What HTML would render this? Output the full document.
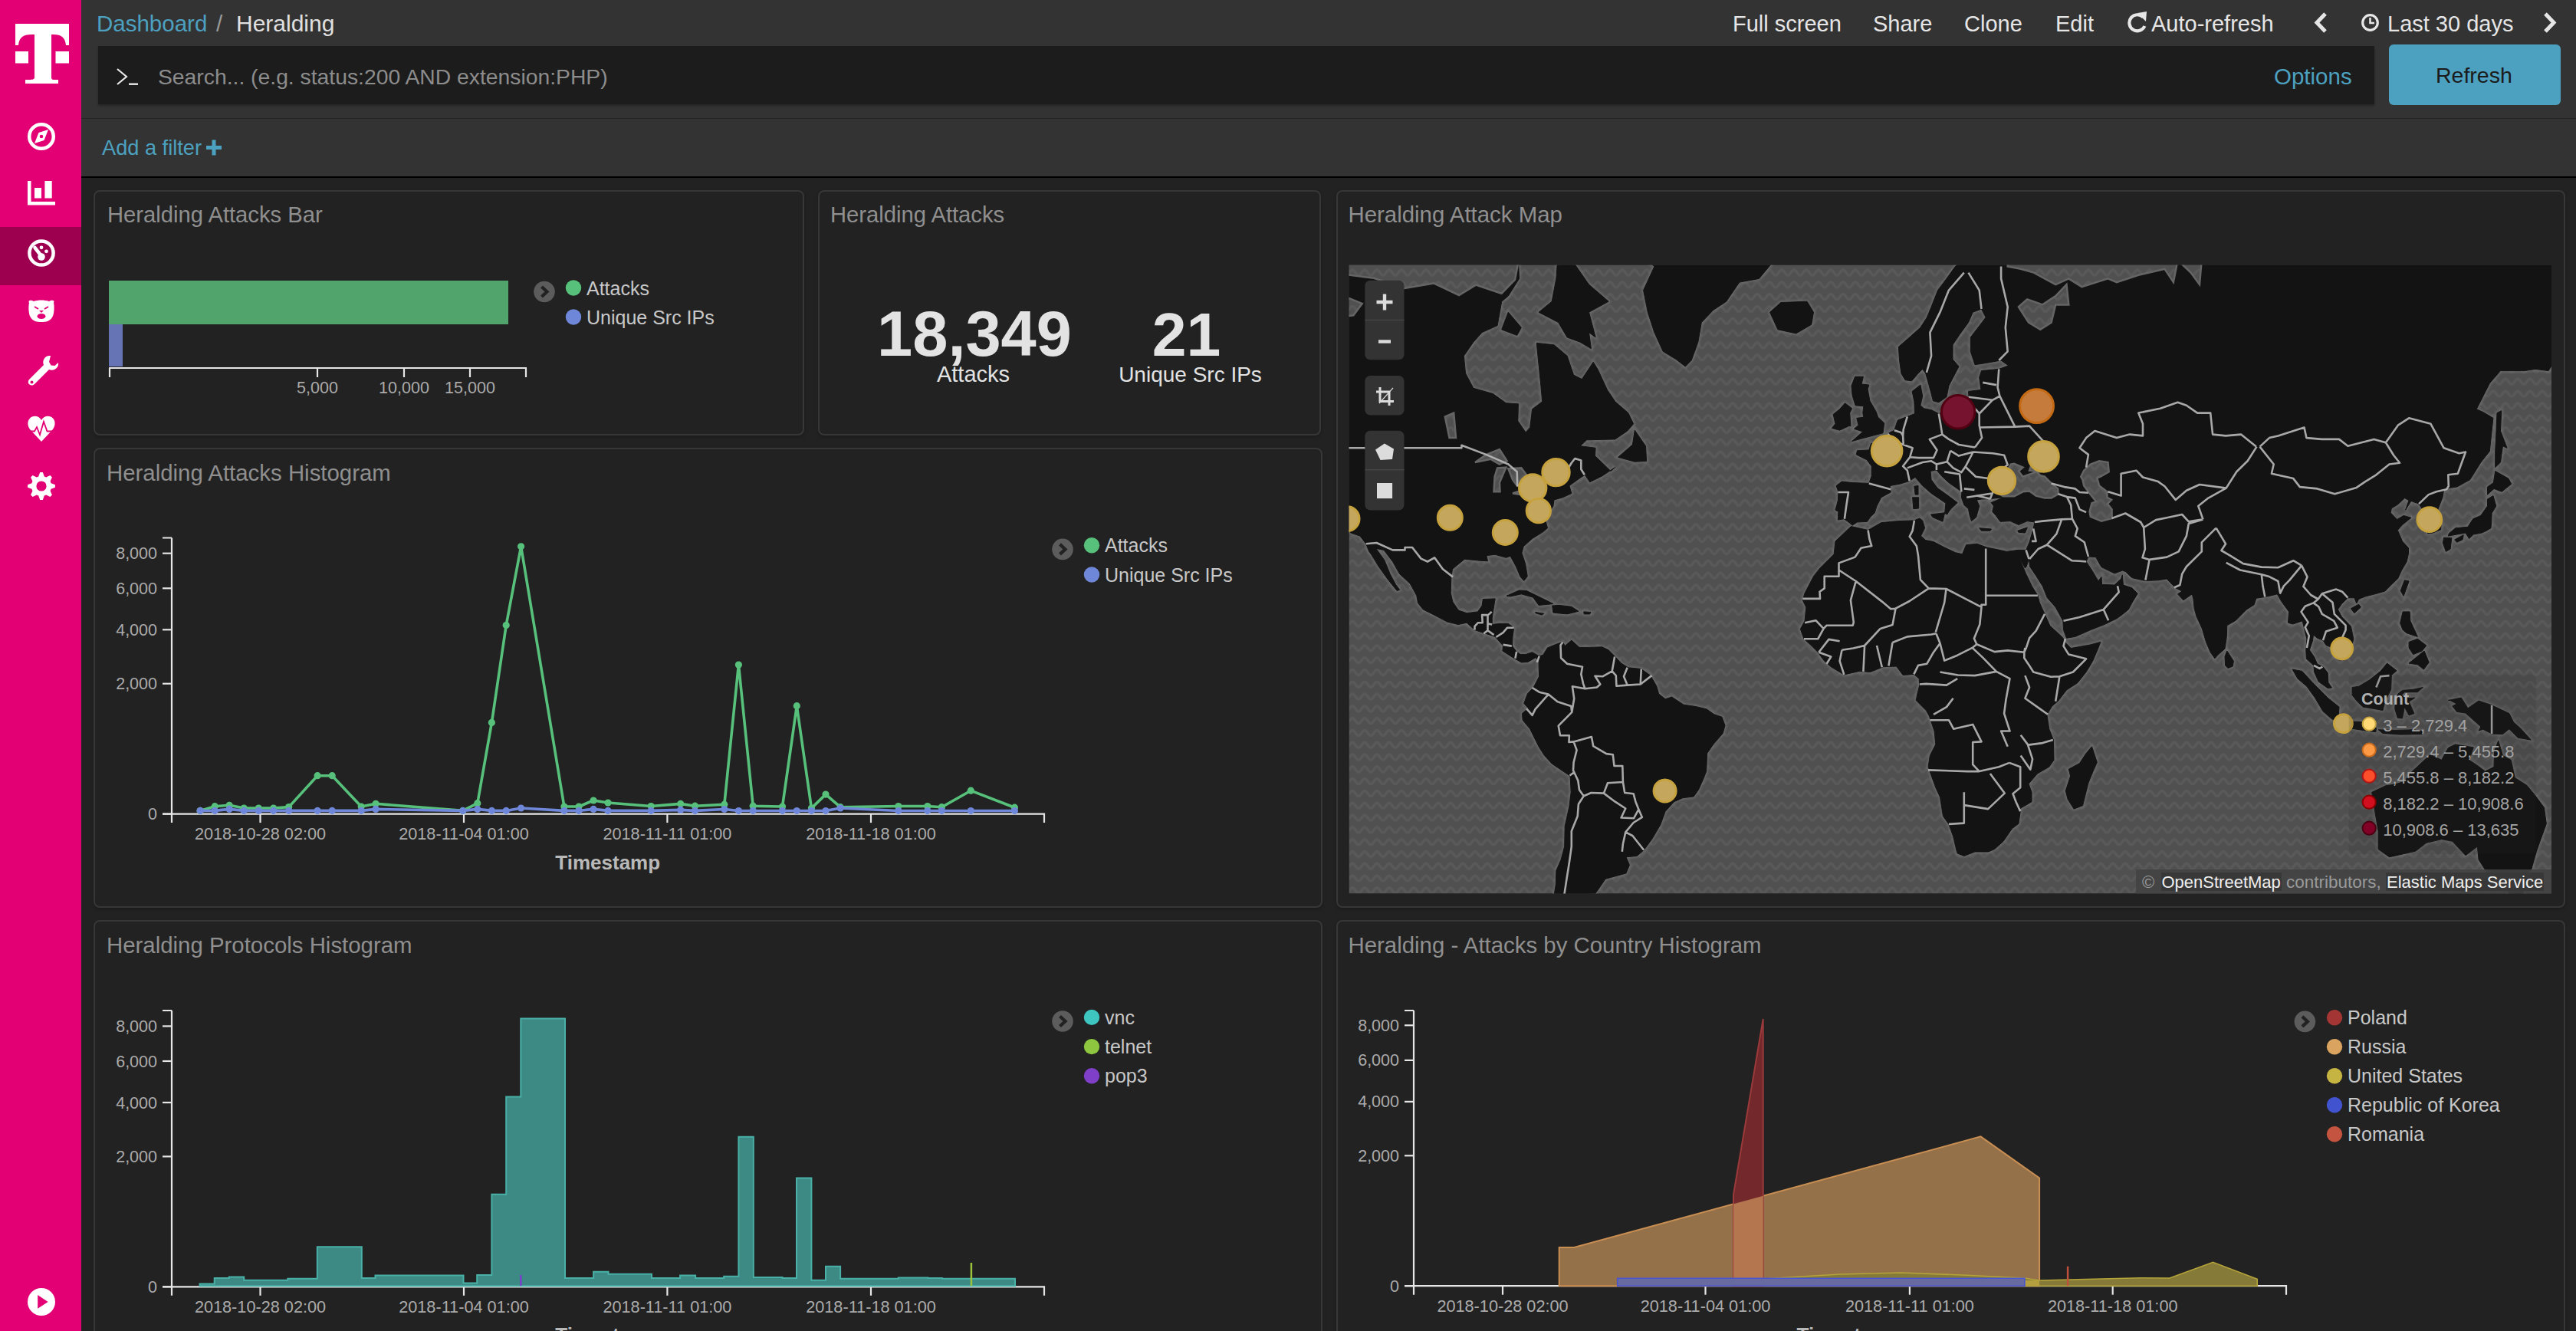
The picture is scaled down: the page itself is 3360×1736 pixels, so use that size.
<!DOCTYPE html>
<html><head><meta charset="utf-8">
<style>
*{box-sizing:border-box;margin:0;padding:0}
html,body{width:3360px;height:1736px;overflow:hidden;background:#222;font-family:"Liberation Sans",sans-serif}
.a{position:absolute;white-space:nowrap;line-height:1}
#side{position:absolute;left:0;top:0;width:106px;height:1736px;background:#e20074}
#act{position:absolute;left:0;top:296px;width:106px;height:76px;background:#9e0050}
#hdr{position:absolute;left:106px;top:0;width:3254px;height:154px;background:#333}
#fbar{position:absolute;left:106px;top:155px;width:3254px;height:75px;background:#333}
#hline{position:absolute;left:106px;top:154px;width:3254px;height:1px;background:#262626}
#bline{position:absolute;left:106px;top:230px;width:3254px;height:2px;background:#000}
#search{position:absolute;left:128px;top:60px;width:2969px;height:76px;background:#1c1c1c;box-shadow:0 2px 3px rgba(0,0,0,.3)}
#refresh{position:absolute;left:3116px;top:58px;width:224px;height:79px;background:#4da1c0;border-radius:6px}
.panel{position:absolute;border:2px solid #373737;border-radius:8px;background:#222;box-shadow:0 2px 4px rgba(0,0,0,.22)}
.hd{color:#e6e6e6;font-size:29px}
svg text{font-family:"Liberation Sans",sans-serif}
</style></head><body>
<div id="side"></div>
<div id="act"></div>
<div id="hdr"></div>
<div id="hline"></div>
<div id="fbar"></div>
<div id="bline"></div>
<div id="search"></div>
<div id="refresh"></div>
<div class="panel" style="left:122px;top:248px;width:927px;height:320px"></div>
<div class="panel" style="left:1067px;top:248px;width:656px;height:320px"></div>
<div class="panel" style="left:1743px;top:248px;width:1603px;height:936px"></div>
<div class="panel" style="left:122px;top:584px;width:1603px;height:600px"></div>
<div class="panel" style="left:122px;top:1200px;width:1603px;height:600px"></div>
<div class="panel" style="left:1743px;top:1200px;width:1603px;height:600px"></div>
<svg style="position:absolute;left:0;top:0" width="3360" height="1736"><defs><clipPath id="mc"><rect x="1759.5" y="345.5" width="1568.5" height="820.0"/></clipPath><pattern id="wave" width="16" height="15.8" patternUnits="userSpaceOnUse"><rect width="16" height="15.8" fill="#505050"/><path d="M-4.0,11.40 L-3.5,11.33 L-3.0,11.14 L-2.5,10.83 L-2.0,10.40 L-1.5,9.89 L-1.0,9.30 L-0.5,8.66 L0.0,8.00 L0.5,7.34 L1.0,6.70 L1.5,6.11 L2.0,5.60 L2.5,5.17 L3.0,4.86 L3.5,4.67 L4.0,4.60 L4.5,4.67 L5.0,4.86 L5.5,5.17 L6.0,5.60 L6.5,6.11 L7.0,6.70 L7.5,7.34 L8.0,8.00 L8.5,8.66 L9.0,9.30 L9.5,9.89 L10.0,10.40 L10.5,10.83 L11.0,11.14 L11.5,11.33 L12.0,11.40 L12.5,11.33 L13.0,11.14 L13.5,10.83 L14.0,10.40 L14.5,9.89 L15.0,9.30 L15.5,8.66 L16.0,8.00 L16.5,7.34 L17.0,6.70 L17.5,6.11 L18.0,5.60 L18.5,5.17 L19.0,4.86 L19.5,4.67 L20.0,4.60" fill="none" stroke="#595959" stroke-width="3.5"/></pattern><filter id="blur1" x="-5%" y="-5%" width="110%" height="110%"><feGaussianBlur stdDeviation="1.6"/></filter></defs><g clip-path="url(#mc)"><rect x="1759.5" y="345.5" width="1568.5" height="820.0" fill="url(#wave)"/><path d="M1651.5,304.4L1651.5,497.8L1708.4,528.8L1725.5,566.6L1739.7,589.5L1742.6,609.6L1742.6,633.5L1740.3,653.4L1748.3,671.0L1754.5,681.0L1761.9,695.0L1773.9,699.1L1781.8,709.3L1785.8,719.4L1789.2,724.0L1798.3,739.0L1809.7,754.9L1822.2,770.5L1825.6,769.3L1820.5,762.4L1813.1,748.6L1805.7,730.5L1794.9,715.4L1805.1,717.4L1816.5,732.5L1825.6,748.6L1839.3,761.2L1847.8,776.7L1849.5,786.4L1856.3,794.9L1870.6,802.1L1887.6,811.0L1901.9,814.5L1913.2,812.2L1923.5,821.6L1936.0,825.7L1950.2,830.4L1960.5,842.0L1959.9,849.0L1972.4,857.0L1984.3,863.9L1992.9,863.4L2003.1,857.6L2007.1,862.2L2007.1,867.9L2007.7,882.2L2000.3,896.5L1992.3,905.0L1987.8,917.5L1993.4,923.8L1985.5,930.6L1986.1,939.2L1995.7,950.7L2007.1,973.8L2014.5,985.4L2024.2,996.0L2041.8,1007.9L2048.1,1012.1L2049.2,1033.3L2046.9,1052.0L2041.2,1077.5L2040.7,1104.1L2036.1,1121.3L2029.9,1135.4L2029.3,1153.7L2027.0,1168.7L2027.0,1200.4L2072.5,1200.4L2078.2,1168.7L2083.9,1161.2L2094.1,1146.3L2120.9,1139.0L2125.4,1128.3L2120.9,1117.8L2135.1,1116.4L2144.2,1108.8L2155.0,1094.0L2165.8,1075.6L2172.1,1058.3L2183.5,1045.7L2194.8,1040.7L2209.1,1038.9L2215.3,1030.3L2222.1,1015.1L2225.6,1006.1L2226.7,982.5L2234.7,970.9L2247.2,956.4L2250.0,946.1L2246.0,935.2L2235.8,931.8L2226.1,924.9L2211.9,921.5L2196.0,919.2L2180.6,909.0L2172.1,911.8L2163.6,905.0L2160.7,894.8L2152.7,881.1L2140.8,872.5L2123.7,870.8L2114.6,865.1L2106.7,856.5L2098.1,847.8L2089.6,843.8L2072.5,844.4L2060.0,844.4L2049.8,835.1L2041.2,842.6L2038.4,837.4L2029.9,840.3L2018.5,844.9L2012.8,854.2L2007.7,855.9L1998.6,850.7L1990.0,853.6L1983.2,853.6L1978.1,850.1L1972.4,842.6L1973.0,830.4L1974.7,818.7L1967.3,813.4L1955.9,813.4L1946.2,814.5L1946.2,806.8L1947.4,797.9L1950.2,780.9L1934.3,781.5L1933.1,790.0L1927.5,797.9L1913.2,799.7L1902.4,796.1L1895.0,785.2L1892.2,773.6L1892.8,753.0L1894.5,742.2L1910.4,729.2L1930.3,731.2L1940.5,731.8L1938.8,724.6L1950.2,723.3L1964.4,727.3L1970.1,725.3L1977.5,739.0L1983.2,752.4L1987.8,757.4L1992.3,751.7L1989.5,735.1L1984.9,721.3L1987.2,712.7L1998.6,702.5L2012.8,693.6L2018.5,688.7L2015.6,678.1L2021.3,667.3L2025.9,660.0L2027.0,651.9L2038.4,648.8L2049.8,643.5L2046.9,633.5L2061.1,623.3L2067.4,619.3L2073.7,628.8L2089.6,620.9L2106.7,609.6L2101.0,614.5L2080.5,594.6L2081.1,584.3L2061.1,581.7L2069.7,573.8L2106.7,572.9L2122.6,562.1L2130.6,552.8L2123.7,538.6L2106.7,523.8L2096.4,508.4L2083.9,481.4L2078.2,472.3L2063.4,494.6L2052.6,489.2L2044.1,464.2L2027.0,449.8L2004.3,447.4L2007.1,475.7L2009.9,503.2L2011.7,523.8L1998.6,533.7L1995.7,557.5L1990.0,563.9L1979.8,549.1L1980.4,526.8L1964.4,525.8L1947.4,513.6L1921.8,506.3L1911.5,486.9L1909.3,464.2L1921.8,446.2L1933.1,433.6L1953.1,424.6L1958.7,393.2L1967.3,386.0L1981.5,363.4L1978.7,304.4ZM2110.6,596.3L2129.4,580.0L2132.3,561.2L2146.5,581.7L2147.6,601.3L2132.3,602.2ZM2075.4,454.7L2061.1,446.2L2044.1,439.9L2032.7,420.6L2007.1,407.2L2024.2,393.2L2029.9,363.4L2031.6,339.3L2032.7,285.4L2052.6,285.4L2053.8,344.3L2072.5,371.1L2098.1,393.2L2072.5,407.2L2081.1,439.9L2072.5,433.6ZM1958.7,429.8L1978.7,437.4L1984.3,427.2L1967.3,407.2ZM2198.3,478.0L2206.2,470.0L2214.8,446.2L2219.3,420.6L2234.7,404.4L2251.7,393.2L2268.8,368.1L2294.4,363.4L2317.2,336.0L2322.8,304.4L2135.1,304.4L2137.9,330.9L2157.9,347.6L2143.6,378.6L2149.3,407.2L2157.9,433.6L2169.2,458.3L2186.3,468.8ZM2318.9,429.8L2308.6,407.2L2322.8,394.6L2357.0,393.2L2365.5,407.2L2362.7,423.3L2342.8,434.9ZM1965.0,777.3L1981.5,769.9L1991.2,770.5L2008.8,779.1L2025.9,787.6L2007.1,789.4L1999.7,779.1L1984.3,774.8L1970.1,777.9ZM2024.7,790.0L2033.8,789.4L2049.8,791.3L2058.9,797.3L2044.1,800.9L2025.9,799.1ZM2002.6,798.5L2013.9,800.3L2011.1,802.1L2003.1,799.7ZM2065.7,797.9L2074.8,798.5L2073.7,800.9L2066.3,800.9ZM2414.4,686.6L2394.0,705.9L2392.2,722.7L2374.0,740.9L2365.5,751.7L2354.1,773.6L2351.3,782.8L2355.8,791.9L2354.1,809.8L2348.4,820.4L2353.0,833.3L2362.7,842.0L2371.2,850.7L2379.7,862.2L2388.3,869.7L2405.3,879.9L2425.2,875.4L2439.5,876.5L2456.5,869.7L2473.6,869.1L2482.1,880.5L2496.4,879.4L2503.2,885.1L2503.8,893.6L2500.9,905.0L2499.2,913.5L2512.3,926.6L2516.3,933.5L2523.1,953.5L2524.8,970.9L2517.4,985.4L2515.1,1000.2L2524.8,1027.2L2530.5,1039.5L2534.5,1064.6L2541.9,1074.9L2547.6,1090.6L2552.1,1109.5L2553.2,1113.0L2561.8,1116.4L2576.0,1110.9L2593.6,1110.9L2601.6,1107.5L2613.0,1097.3L2624.4,1080.8L2632.9,1074.3L2635.2,1058.3L2634.0,1055.1L2650.0,1045.7L2650.0,1033.3L2646.0,1022.4L2657.4,1009.1L2672.7,1000.2L2679.0,991.3L2678.4,965.1L2672.7,950.7L2671.0,939.2L2669.9,931.8L2676.7,920.9L2684.7,914.1L2695.5,899.9L2709.7,890.8L2721.1,876.5L2729.6,862.2L2737.0,844.9L2739.8,837.4L2726.8,840.9L2701.2,845.5L2694.3,838.6L2690.4,831.6L2683.0,824.6L2673.9,816.3L2667.0,800.9L2660.2,785.8L2657.9,776.7L2650.5,764.9L2642.6,748.6L2638.6,739.0L2633.5,726.6L2631.8,717.4L2617.5,719.4L2601.6,716.0L2591.4,714.0L2578.8,709.3L2564.6,710.7L2559.5,722.7L2550.4,720.7L2536.2,714.0L2522.0,706.6L2511.7,704.6L2505.5,699.1L2510.6,688.7L2507.7,678.9L2503.8,676.0L2496.4,678.9L2476.4,679.6L2453.7,681.7L2436.6,691.5ZM2728.5,973.8L2735.3,994.3L2731.3,1003.2L2723.9,1021.2L2716.5,1050.7L2705.1,1055.1L2697.2,1042.6L2694.3,1031.5L2700.6,1012.1L2698.3,1003.2L2712.5,995.5L2721.1,982.5ZM2416.1,685.2L2412.2,681.7L2405.3,676.7L2397.4,678.1L2397.9,667.3L2394.0,665.2L2397.4,652.6L2397.9,641.3L2395.1,633.5L2402.5,628.1L2416.7,629.6L2437.8,630.4L2441.2,620.9L2441.2,608.0L2434.9,599.7L2421.3,592.9L2422.4,587.8L2437.8,586.9L2440.6,578.2L2449.1,580.0L2457.1,573.8L2462.2,565.7L2470.8,561.2L2475.3,548.1L2487.8,543.4L2497.5,539.5L2496.9,523.8L2494.1,510.5L2504.9,502.1L2507.7,516.7L2504.9,528.8L2509.4,532.7L2519.1,534.7L2528.8,539.5L2553.2,531.7L2568.6,526.8L2567.5,510.5L2584.0,508.4L2581.7,492.4L2584.5,483.6L2607.3,481.4L2619.8,476.9L2610.1,470.0L2590.2,473.5L2576.0,475.7L2570.3,458.3L2570.3,439.9L2590.2,414.0L2584.5,403.0L2573.2,407.2L2567.5,420.6L2556.1,436.2L2547.0,449.8L2547.0,468.8L2555.0,478.0L2541.9,503.2L2539.0,517.7L2528.8,524.8L2521.4,522.8L2519.1,513.6L2515.7,501.0L2511.7,486.9L2507.7,481.4L2502.0,486.9L2493.5,496.8L2485.0,495.7L2479.9,486.9L2477.6,470.0L2476.4,452.3L2487.8,442.4L2504.9,427.2L2513.4,414.0L2519.1,400.3L2527.6,378.6L2539.0,363.4L2550.4,347.6L2561.8,336.0L2561.8,221.4L3472.0,221.4L3472.0,427.2L3358.2,452.3L3341.2,454.7L3324.1,483.6L3307.0,481.4L3292.8,483.6L3261.5,483.6L3247.3,500.0L3230.2,533.7L3238.8,537.6L3251.9,545.3L3250.1,562.1L3247.3,588.6L3235.9,603.0L3221.7,625.7L3204.6,635.1L3193.3,636.6L3187.6,638.9L3185.9,648.8L3179.0,666.6L3184.2,681.7L3183.6,690.8L3173.3,695.0L3166.5,695.7L3167.7,688.0L3168.2,674.6L3162.0,672.4L3159.7,664.4L3155.1,657.1L3144.9,653.4L3137.5,665.2L3142.1,652.6L3136.4,649.6L3127.8,657.8L3119.3,663.0L3118.2,668.8L3124.4,675.3L3126.7,677.4L3135.2,672.4L3144.9,675.3L3133.5,684.5L3127.3,691.5L3133.5,705.9L3141.5,714.7L3141.5,722.0L3139.2,732.5L3132.4,744.1L3127.8,754.3L3118.7,763.0L3110.8,771.1L3097.7,774.8L3085.2,777.9L3076.6,781.5L3073.8,787.0L3070.9,779.7L3062.4,779.7L3054.4,787.6L3049.3,794.9L3054.4,804.5L3066.4,816.9L3069.8,833.3L3068.1,840.3L3055.6,846.1L3045.3,855.3L3044.2,845.5L3034.0,841.5L3030.0,835.1L3022.6,832.2L3017.5,828.1L3016.3,836.2L3012.3,847.8L3018.6,857.0L3022.6,866.2L3030.0,869.7L3036.2,877.7L3036.8,890.2L3041.4,897.0L3036.2,897.6L3024.3,889.1L3018.6,876.5L3018.0,867.9L3008.4,859.3L3007.8,847.8L3008.9,833.3L3003.2,809.8L2990.7,814.0L2984.5,812.2L2985.6,797.9L2975.9,784.6L2970.3,774.8L2962.9,776.7L2954.3,778.5L2942.9,780.3L2940.1,788.8L2930.4,794.9L2916.2,809.2L2904.8,815.7L2904.3,830.4L2902.0,846.1L2892.9,854.2L2888.9,858.8L2883.2,850.7L2877.5,837.4L2872.4,819.9L2865.0,803.9L2862.2,793.7L2861.0,781.5L2859.3,774.8L2847.9,782.8L2840.5,774.8L2846.2,771.1L2837.7,766.8L2830.3,759.3L2826.3,754.9L2814.9,756.8L2797.9,757.4L2780.8,753.6L2772.3,745.4L2768.3,744.1L2758.1,747.9L2741.0,739.6L2733.6,726.6L2723.9,726.0L2721.1,732.5L2729.6,745.4L2737.0,758.0L2741.0,752.4L2741.6,762.4L2758.1,763.0L2766.6,754.9L2768.3,749.8L2769.4,763.0L2780.8,766.8L2788.2,774.2L2780.8,786.4L2776.3,794.9L2768.3,801.5L2760.9,806.8L2745.0,814.5L2726.8,821.6L2706.8,830.4L2695.5,832.2L2691.5,821.6L2690.9,809.8L2681.2,791.9L2670.4,779.7L2664.2,764.3L2656.2,751.7L2647.7,739.0L2646.5,729.2L2643.1,739.0L2641.4,740.9L2633.5,726.6L2631.8,717.4L2642.6,717.4L2647.1,707.3L2652.2,689.4L2653.9,681.0L2644.3,679.6L2632.9,684.5L2622.1,679.6L2609.0,680.3L2603.3,672.4L2598.8,667.3L2600.5,660.0L2597.1,655.6L2604.4,652.6L2613.0,648.8L2595.9,650.4L2584.5,651.1L2578.3,651.9L2581.7,660.0L2577.7,674.6L2571.5,679.6L2569.2,672.4L2567.5,663.7L2561.8,658.6L2558.4,648.8L2558.9,641.3L2553.2,637.4L2541.9,629.6L2533.3,621.7L2525.9,612.9L2518.0,614.5L2519.1,625.7L2527.1,636.6L2539.0,645.1L2553.2,655.6L2544.7,663.7L2541.9,667.3L2539.6,671.0L2536.7,669.5L2537.9,656.3L2529.4,650.4L2519.1,643.5L2507.7,633.5L2498.1,622.5L2490.7,627.3L2478.2,631.2L2465.1,633.5L2466.2,642.0L2453.7,648.8L2448.0,660.0L2445.2,668.8L2439.5,674.6L2435.5,680.3L2422.4,681.0ZM2415.6,575.6L2428.1,572.0L2456.0,564.8L2457.7,551.9L2449.7,544.3L2446.9,536.6L2438.9,522.8L2436.1,507.4L2437.8,502.1L2428.1,501.0L2430.4,491.3L2419.6,491.3L2415.0,503.2L2416.1,515.7L2420.1,528.8L2430.9,529.8L2429.8,538.6L2430.9,544.3L2421.8,545.3L2424.1,554.7L2418.4,559.3L2429.8,563.0ZM2413.9,555.6L2412.7,538.6L2415.6,532.7L2406.5,525.8L2399.6,533.7L2391.1,540.5L2394.0,552.8L2389.4,558.4L2399.6,561.2L2411.6,555.6ZM2518.5,671.0L2536.7,668.8L2533.9,680.3L2520.8,674.6ZM2494.6,648.8L2502.6,648.8L2502.6,663.0L2495.8,663.7ZM2496.9,634.3L2502.0,633.5L2502.0,645.1L2498.1,645.1ZM2581.7,688.7L2597.6,690.1L2595.9,692.2L2584.5,692.2ZM2631.8,692.2L2644.3,688.0L2641.4,695.0L2632.9,694.3ZM3244.5,645.1L3253.0,637.4L3263.2,641.3L3275.7,631.2L3271.8,624.1L3254.7,614.5L3252.4,629.6L3244.5,635.1ZM3251.9,646.6L3255.8,660.0L3250.1,669.5L3249.6,681.7L3249.0,688.7L3243.3,692.2L3237.1,695.0L3226.3,697.0L3220.6,702.5L3216.0,695.0L3204.6,697.0L3193.3,699.1L3194.4,695.7L3202.9,688.7L3218.9,687.3L3225.7,676.7L3235.9,672.4L3244.5,660.0L3244.5,651.1ZM3187.6,701.2L3197.8,701.8L3196.1,716.0L3190.4,719.4L3186.4,708.0ZM3201.8,703.9L3213.2,697.7L3212.0,703.9L3204.6,707.3ZM3254.7,609.6L3261.5,603.0L3264.4,581.7L3270.1,584.3L3261.5,562.1L3262.7,535.7L3257.0,538.6L3255.8,566.6L3254.7,588.6ZM3131.2,770.5L3136.4,756.8L3142.1,758.0L3135.2,777.3ZM3066.4,793.7L3076.6,788.2L3079.5,791.9L3070.9,799.7ZM3130.7,812.8L3134.1,797.9L3143.2,797.9L3143.8,809.8L3153.4,830.4L3139.2,825.7L3134.1,821.6ZM3142.1,865.1L3162.0,849.0L3168.2,863.9L3161.4,873.1L3153.4,866.8ZM3142.1,837.4L3153.4,833.3L3164.8,842.0L3159.1,849.0L3147.7,853.6L3142.1,844.9ZM3068.1,896.5L3076.6,895.3L3090.9,886.8L3105.1,875.4L3113.6,865.1L3126.1,874.8L3119.3,880.5L3118.7,899.3L3111.3,913.5L3107.9,926.6L3099.4,924.9L3082.3,922.1L3074.9,915.2L3068.1,906.7ZM2990.2,873.1L3002.7,875.4L3016.9,890.8L3036.8,910.7L3051.0,922.1L3049.9,938.1L3042.5,938.6L3030.0,927.8L3019.2,909.6L3008.9,895.3L2997.0,885.1ZM3046.5,943.8L3053.9,939.2L3064.1,940.9L3079.5,941.5L3089.2,944.3L3099.4,949.5L3098.8,954.7L3082.3,952.4L3062.4,949.5L3048.2,944.9ZM3102.2,951.8L3125.0,952.4L3147.7,951.8L3159.1,953.5L3159.1,957.6L3130.7,958.1L3107.9,956.4ZM3123.9,920.4L3127.8,905.0L3133.5,900.4L3147.7,899.3L3160.3,896.5L3153.4,902.7L3136.4,902.7L3132.4,906.7L3139.2,910.7L3150.0,910.1L3142.1,915.2L3148.9,930.6L3142.1,932.9L3136.4,922.1L3133.5,936.9L3127.3,936.3L3123.9,924.9ZM3193.3,913.5L3210.3,910.1L3218.9,923.8L3233.1,914.1L3250.1,919.8L3272.9,930.6L3278.6,942.1L3287.1,949.5L3301.3,965.1L3284.3,962.2L3272.9,950.7L3264.4,957.6L3250.1,957.0L3238.8,951.2L3233.1,953.0L3235.9,947.8L3216.0,930.1L3204.6,928.3L3198.9,920.9L3204.6,918.1L3195.0,913.0ZM2902.6,867.9L2902.0,856.5L2904.8,849.0L2913.4,862.2L2912.2,869.1L2906.0,871.4ZM3093.7,1033.3L3097.7,1058.3L3102.2,1084.0L3102.2,1107.5L3116.5,1117.8L3150.6,1110.2L3164.8,1099.3L3184.7,1094.6L3198.9,1097.3L3216.0,1115.7L3231.4,1104.1L3233.1,1121.3L3244.5,1139.0L3264.4,1144.8L3280.3,1147.0L3301.3,1135.4L3308.7,1109.5L3321.3,1074.3L3318.4,1053.2L3305.9,1036.4L3295.7,1024.2L3280.3,1014.5L3275.2,991.3L3264.4,985.4L3258.7,966.2L3253.6,979.6L3253.0,1000.2L3241.6,1006.1L3231.4,998.4L3220.6,991.3L3226.3,974.9L3202.4,970.9L3193.3,975.5L3184.7,991.3L3169.9,984.3L3153.4,999.6L3143.2,1009.1L3136.4,1019.3L3123.9,1023.0L3111.9,1024.8L3096.5,1032.1ZM3270.6,1158.9L3291.7,1160.4L3290.0,1178.0L3275.7,1178.8Z" fill="none" stroke="#7a7a7a" stroke-width="5" opacity="0.55" filter="url(#blur1)"/><path d="M1651.5,304.4L1651.5,497.8L1708.4,528.8L1725.5,566.6L1739.7,589.5L1742.6,609.6L1742.6,633.5L1740.3,653.4L1748.3,671.0L1754.5,681.0L1761.9,695.0L1773.9,699.1L1781.8,709.3L1785.8,719.4L1789.2,724.0L1798.3,739.0L1809.7,754.9L1822.2,770.5L1825.6,769.3L1820.5,762.4L1813.1,748.6L1805.7,730.5L1794.9,715.4L1805.1,717.4L1816.5,732.5L1825.6,748.6L1839.3,761.2L1847.8,776.7L1849.5,786.4L1856.3,794.9L1870.6,802.1L1887.6,811.0L1901.9,814.5L1913.2,812.2L1923.5,821.6L1936.0,825.7L1950.2,830.4L1960.5,842.0L1959.9,849.0L1972.4,857.0L1984.3,863.9L1992.9,863.4L2003.1,857.6L2007.1,862.2L2007.1,867.9L2007.7,882.2L2000.3,896.5L1992.3,905.0L1987.8,917.5L1993.4,923.8L1985.5,930.6L1986.1,939.2L1995.7,950.7L2007.1,973.8L2014.5,985.4L2024.2,996.0L2041.8,1007.9L2048.1,1012.1L2049.2,1033.3L2046.9,1052.0L2041.2,1077.5L2040.7,1104.1L2036.1,1121.3L2029.9,1135.4L2029.3,1153.7L2027.0,1168.7L2027.0,1200.4L2072.5,1200.4L2078.2,1168.7L2083.9,1161.2L2094.1,1146.3L2120.9,1139.0L2125.4,1128.3L2120.9,1117.8L2135.1,1116.4L2144.2,1108.8L2155.0,1094.0L2165.8,1075.6L2172.1,1058.3L2183.5,1045.7L2194.8,1040.7L2209.1,1038.9L2215.3,1030.3L2222.1,1015.1L2225.6,1006.1L2226.7,982.5L2234.7,970.9L2247.2,956.4L2250.0,946.1L2246.0,935.2L2235.8,931.8L2226.1,924.9L2211.9,921.5L2196.0,919.2L2180.6,909.0L2172.1,911.8L2163.6,905.0L2160.7,894.8L2152.7,881.1L2140.8,872.5L2123.7,870.8L2114.6,865.1L2106.7,856.5L2098.1,847.8L2089.6,843.8L2072.5,844.4L2060.0,844.4L2049.8,835.1L2041.2,842.6L2038.4,837.4L2029.9,840.3L2018.5,844.9L2012.8,854.2L2007.7,855.9L1998.6,850.7L1990.0,853.6L1983.2,853.6L1978.1,850.1L1972.4,842.6L1973.0,830.4L1974.7,818.7L1967.3,813.4L1955.9,813.4L1946.2,814.5L1946.2,806.8L1947.4,797.9L1950.2,780.9L1934.3,781.5L1933.1,790.0L1927.5,797.9L1913.2,799.7L1902.4,796.1L1895.0,785.2L1892.2,773.6L1892.8,753.0L1894.5,742.2L1910.4,729.2L1930.3,731.2L1940.5,731.8L1938.8,724.6L1950.2,723.3L1964.4,727.3L1970.1,725.3L1977.5,739.0L1983.2,752.4L1987.8,757.4L1992.3,751.7L1989.5,735.1L1984.9,721.3L1987.2,712.7L1998.6,702.5L2012.8,693.6L2018.5,688.7L2015.6,678.1L2021.3,667.3L2025.9,660.0L2027.0,651.9L2038.4,648.8L2049.8,643.5L2046.9,633.5L2061.1,623.3L2067.4,619.3L2073.7,628.8L2089.6,620.9L2106.7,609.6L2101.0,614.5L2080.5,594.6L2081.1,584.3L2061.1,581.7L2069.7,573.8L2106.7,572.9L2122.6,562.1L2130.6,552.8L2123.7,538.6L2106.7,523.8L2096.4,508.4L2083.9,481.4L2078.2,472.3L2063.4,494.6L2052.6,489.2L2044.1,464.2L2027.0,449.8L2004.3,447.4L2007.1,475.7L2009.9,503.2L2011.7,523.8L1998.6,533.7L1995.7,557.5L1990.0,563.9L1979.8,549.1L1980.4,526.8L1964.4,525.8L1947.4,513.6L1921.8,506.3L1911.5,486.9L1909.3,464.2L1921.8,446.2L1933.1,433.6L1953.1,424.6L1958.7,393.2L1967.3,386.0L1981.5,363.4L1978.7,304.4ZM2110.6,596.3L2129.4,580.0L2132.3,561.2L2146.5,581.7L2147.6,601.3L2132.3,602.2ZM2075.4,454.7L2061.1,446.2L2044.1,439.9L2032.7,420.6L2007.1,407.2L2024.2,393.2L2029.9,363.4L2031.6,339.3L2032.7,285.4L2052.6,285.4L2053.8,344.3L2072.5,371.1L2098.1,393.2L2072.5,407.2L2081.1,439.9L2072.5,433.6ZM1958.7,429.8L1978.7,437.4L1984.3,427.2L1967.3,407.2ZM2198.3,478.0L2206.2,470.0L2214.8,446.2L2219.3,420.6L2234.7,404.4L2251.7,393.2L2268.8,368.1L2294.4,363.4L2317.2,336.0L2322.8,304.4L2135.1,304.4L2137.9,330.9L2157.9,347.6L2143.6,378.6L2149.3,407.2L2157.9,433.6L2169.2,458.3L2186.3,468.8ZM2318.9,429.8L2308.6,407.2L2322.8,394.6L2357.0,393.2L2365.5,407.2L2362.7,423.3L2342.8,434.9ZM1965.0,777.3L1981.5,769.9L1991.2,770.5L2008.8,779.1L2025.9,787.6L2007.1,789.4L1999.7,779.1L1984.3,774.8L1970.1,777.9ZM2024.7,790.0L2033.8,789.4L2049.8,791.3L2058.9,797.3L2044.1,800.9L2025.9,799.1ZM2002.6,798.5L2013.9,800.3L2011.1,802.1L2003.1,799.7ZM2065.7,797.9L2074.8,798.5L2073.7,800.9L2066.3,800.9ZM2414.4,686.6L2394.0,705.9L2392.2,722.7L2374.0,740.9L2365.5,751.7L2354.1,773.6L2351.3,782.8L2355.8,791.9L2354.1,809.8L2348.4,820.4L2353.0,833.3L2362.7,842.0L2371.2,850.7L2379.7,862.2L2388.3,869.7L2405.3,879.9L2425.2,875.4L2439.5,876.5L2456.5,869.7L2473.6,869.1L2482.1,880.5L2496.4,879.4L2503.2,885.1L2503.8,893.6L2500.9,905.0L2499.2,913.5L2512.3,926.6L2516.3,933.5L2523.1,953.5L2524.8,970.9L2517.4,985.4L2515.1,1000.2L2524.8,1027.2L2530.5,1039.5L2534.5,1064.6L2541.9,1074.9L2547.6,1090.6L2552.1,1109.5L2553.2,1113.0L2561.8,1116.4L2576.0,1110.9L2593.6,1110.9L2601.6,1107.5L2613.0,1097.3L2624.4,1080.8L2632.9,1074.3L2635.2,1058.3L2634.0,1055.1L2650.0,1045.7L2650.0,1033.3L2646.0,1022.4L2657.4,1009.1L2672.7,1000.2L2679.0,991.3L2678.4,965.1L2672.7,950.7L2671.0,939.2L2669.9,931.8L2676.7,920.9L2684.7,914.1L2695.5,899.9L2709.7,890.8L2721.1,876.5L2729.6,862.2L2737.0,844.9L2739.8,837.4L2726.8,840.9L2701.2,845.5L2694.3,838.6L2690.4,831.6L2683.0,824.6L2673.9,816.3L2667.0,800.9L2660.2,785.8L2657.9,776.7L2650.5,764.9L2642.6,748.6L2638.6,739.0L2633.5,726.6L2631.8,717.4L2617.5,719.4L2601.6,716.0L2591.4,714.0L2578.8,709.3L2564.6,710.7L2559.5,722.7L2550.4,720.7L2536.2,714.0L2522.0,706.6L2511.7,704.6L2505.5,699.1L2510.6,688.7L2507.7,678.9L2503.8,676.0L2496.4,678.9L2476.4,679.6L2453.7,681.7L2436.6,691.5ZM2728.5,973.8L2735.3,994.3L2731.3,1003.2L2723.9,1021.2L2716.5,1050.7L2705.1,1055.1L2697.2,1042.6L2694.3,1031.5L2700.6,1012.1L2698.3,1003.2L2712.5,995.5L2721.1,982.5ZM2416.1,685.2L2412.2,681.7L2405.3,676.7L2397.4,678.1L2397.9,667.3L2394.0,665.2L2397.4,652.6L2397.9,641.3L2395.1,633.5L2402.5,628.1L2416.7,629.6L2437.8,630.4L2441.2,620.9L2441.2,608.0L2434.9,599.7L2421.3,592.9L2422.4,587.8L2437.8,586.9L2440.6,578.2L2449.1,580.0L2457.1,573.8L2462.2,565.7L2470.8,561.2L2475.3,548.1L2487.8,543.4L2497.5,539.5L2496.9,523.8L2494.1,510.5L2504.9,502.1L2507.7,516.7L2504.9,528.8L2509.4,532.7L2519.1,534.7L2528.8,539.5L2553.2,531.7L2568.6,526.8L2567.5,510.5L2584.0,508.4L2581.7,492.4L2584.5,483.6L2607.3,481.4L2619.8,476.9L2610.1,470.0L2590.2,473.5L2576.0,475.7L2570.3,458.3L2570.3,439.9L2590.2,414.0L2584.5,403.0L2573.2,407.2L2567.5,420.6L2556.1,436.2L2547.0,449.8L2547.0,468.8L2555.0,478.0L2541.9,503.2L2539.0,517.7L2528.8,524.8L2521.4,522.8L2519.1,513.6L2515.7,501.0L2511.7,486.9L2507.7,481.4L2502.0,486.9L2493.5,496.8L2485.0,495.7L2479.9,486.9L2477.6,470.0L2476.4,452.3L2487.8,442.4L2504.9,427.2L2513.4,414.0L2519.1,400.3L2527.6,378.6L2539.0,363.4L2550.4,347.6L2561.8,336.0L2561.8,221.4L3472.0,221.4L3472.0,427.2L3358.2,452.3L3341.2,454.7L3324.1,483.6L3307.0,481.4L3292.8,483.6L3261.5,483.6L3247.3,500.0L3230.2,533.7L3238.8,537.6L3251.9,545.3L3250.1,562.1L3247.3,588.6L3235.9,603.0L3221.7,625.7L3204.6,635.1L3193.3,636.6L3187.6,638.9L3185.9,648.8L3179.0,666.6L3184.2,681.7L3183.6,690.8L3173.3,695.0L3166.5,695.7L3167.7,688.0L3168.2,674.6L3162.0,672.4L3159.7,664.4L3155.1,657.1L3144.9,653.4L3137.5,665.2L3142.1,652.6L3136.4,649.6L3127.8,657.8L3119.3,663.0L3118.2,668.8L3124.4,675.3L3126.7,677.4L3135.2,672.4L3144.9,675.3L3133.5,684.5L3127.3,691.5L3133.5,705.9L3141.5,714.7L3141.5,722.0L3139.2,732.5L3132.4,744.1L3127.8,754.3L3118.7,763.0L3110.8,771.1L3097.7,774.8L3085.2,777.9L3076.6,781.5L3073.8,787.0L3070.9,779.7L3062.4,779.7L3054.4,787.6L3049.3,794.9L3054.4,804.5L3066.4,816.9L3069.8,833.3L3068.1,840.3L3055.6,846.1L3045.3,855.3L3044.2,845.5L3034.0,841.5L3030.0,835.1L3022.6,832.2L3017.5,828.1L3016.3,836.2L3012.3,847.8L3018.6,857.0L3022.6,866.2L3030.0,869.7L3036.2,877.7L3036.8,890.2L3041.4,897.0L3036.2,897.6L3024.3,889.1L3018.6,876.5L3018.0,867.9L3008.4,859.3L3007.8,847.8L3008.9,833.3L3003.2,809.8L2990.7,814.0L2984.5,812.2L2985.6,797.9L2975.9,784.6L2970.3,774.8L2962.9,776.7L2954.3,778.5L2942.9,780.3L2940.1,788.8L2930.4,794.9L2916.2,809.2L2904.8,815.7L2904.3,830.4L2902.0,846.1L2892.9,854.2L2888.9,858.8L2883.2,850.7L2877.5,837.4L2872.4,819.9L2865.0,803.9L2862.2,793.7L2861.0,781.5L2859.3,774.8L2847.9,782.8L2840.5,774.8L2846.2,771.1L2837.7,766.8L2830.3,759.3L2826.3,754.9L2814.9,756.8L2797.9,757.4L2780.8,753.6L2772.3,745.4L2768.3,744.1L2758.1,747.9L2741.0,739.6L2733.6,726.6L2723.9,726.0L2721.1,732.5L2729.6,745.4L2737.0,758.0L2741.0,752.4L2741.6,762.4L2758.1,763.0L2766.6,754.9L2768.3,749.8L2769.4,763.0L2780.8,766.8L2788.2,774.2L2780.8,786.4L2776.3,794.9L2768.3,801.5L2760.9,806.8L2745.0,814.5L2726.8,821.6L2706.8,830.4L2695.5,832.2L2691.5,821.6L2690.9,809.8L2681.2,791.9L2670.4,779.7L2664.2,764.3L2656.2,751.7L2647.7,739.0L2646.5,729.2L2643.1,739.0L2641.4,740.9L2633.5,726.6L2631.8,717.4L2642.6,717.4L2647.1,707.3L2652.2,689.4L2653.9,681.0L2644.3,679.6L2632.9,684.5L2622.1,679.6L2609.0,680.3L2603.3,672.4L2598.8,667.3L2600.5,660.0L2597.1,655.6L2604.4,652.6L2613.0,648.8L2595.9,650.4L2584.5,651.1L2578.3,651.9L2581.7,660.0L2577.7,674.6L2571.5,679.6L2569.2,672.4L2567.5,663.7L2561.8,658.6L2558.4,648.8L2558.9,641.3L2553.2,637.4L2541.9,629.6L2533.3,621.7L2525.9,612.9L2518.0,614.5L2519.1,625.7L2527.1,636.6L2539.0,645.1L2553.2,655.6L2544.7,663.7L2541.9,667.3L2539.6,671.0L2536.7,669.5L2537.9,656.3L2529.4,650.4L2519.1,643.5L2507.7,633.5L2498.1,622.5L2490.7,627.3L2478.2,631.2L2465.1,633.5L2466.2,642.0L2453.7,648.8L2448.0,660.0L2445.2,668.8L2439.5,674.6L2435.5,680.3L2422.4,681.0ZM2415.6,575.6L2428.1,572.0L2456.0,564.8L2457.7,551.9L2449.7,544.3L2446.9,536.6L2438.9,522.8L2436.1,507.4L2437.8,502.1L2428.1,501.0L2430.4,491.3L2419.6,491.3L2415.0,503.2L2416.1,515.7L2420.1,528.8L2430.9,529.8L2429.8,538.6L2430.9,544.3L2421.8,545.3L2424.1,554.7L2418.4,559.3L2429.8,563.0ZM2413.9,555.6L2412.7,538.6L2415.6,532.7L2406.5,525.8L2399.6,533.7L2391.1,540.5L2394.0,552.8L2389.4,558.4L2399.6,561.2L2411.6,555.6ZM2518.5,671.0L2536.7,668.8L2533.9,680.3L2520.8,674.6ZM2494.6,648.8L2502.6,648.8L2502.6,663.0L2495.8,663.7ZM2496.9,634.3L2502.0,633.5L2502.0,645.1L2498.1,645.1ZM2581.7,688.7L2597.6,690.1L2595.9,692.2L2584.5,692.2ZM2631.8,692.2L2644.3,688.0L2641.4,695.0L2632.9,694.3ZM3244.5,645.1L3253.0,637.4L3263.2,641.3L3275.7,631.2L3271.8,624.1L3254.7,614.5L3252.4,629.6L3244.5,635.1ZM3251.9,646.6L3255.8,660.0L3250.1,669.5L3249.6,681.7L3249.0,688.7L3243.3,692.2L3237.1,695.0L3226.3,697.0L3220.6,702.5L3216.0,695.0L3204.6,697.0L3193.3,699.1L3194.4,695.7L3202.9,688.7L3218.9,687.3L3225.7,676.7L3235.9,672.4L3244.5,660.0L3244.5,651.1ZM3187.6,701.2L3197.8,701.8L3196.1,716.0L3190.4,719.4L3186.4,708.0ZM3201.8,703.9L3213.2,697.7L3212.0,703.9L3204.6,707.3ZM3254.7,609.6L3261.5,603.0L3264.4,581.7L3270.1,584.3L3261.5,562.1L3262.7,535.7L3257.0,538.6L3255.8,566.6L3254.7,588.6ZM3131.2,770.5L3136.4,756.8L3142.1,758.0L3135.2,777.3ZM3066.4,793.7L3076.6,788.2L3079.5,791.9L3070.9,799.7ZM3130.7,812.8L3134.1,797.9L3143.2,797.9L3143.8,809.8L3153.4,830.4L3139.2,825.7L3134.1,821.6ZM3142.1,865.1L3162.0,849.0L3168.2,863.9L3161.4,873.1L3153.4,866.8ZM3142.1,837.4L3153.4,833.3L3164.8,842.0L3159.1,849.0L3147.7,853.6L3142.1,844.9ZM3068.1,896.5L3076.6,895.3L3090.9,886.8L3105.1,875.4L3113.6,865.1L3126.1,874.8L3119.3,880.5L3118.7,899.3L3111.3,913.5L3107.9,926.6L3099.4,924.9L3082.3,922.1L3074.9,915.2L3068.1,906.7ZM2990.2,873.1L3002.7,875.4L3016.9,890.8L3036.8,910.7L3051.0,922.1L3049.9,938.1L3042.5,938.6L3030.0,927.8L3019.2,909.6L3008.9,895.3L2997.0,885.1ZM3046.5,943.8L3053.9,939.2L3064.1,940.9L3079.5,941.5L3089.2,944.3L3099.4,949.5L3098.8,954.7L3082.3,952.4L3062.4,949.5L3048.2,944.9ZM3102.2,951.8L3125.0,952.4L3147.7,951.8L3159.1,953.5L3159.1,957.6L3130.7,958.1L3107.9,956.4ZM3123.9,920.4L3127.8,905.0L3133.5,900.4L3147.7,899.3L3160.3,896.5L3153.4,902.7L3136.4,902.7L3132.4,906.7L3139.2,910.7L3150.0,910.1L3142.1,915.2L3148.9,930.6L3142.1,932.9L3136.4,922.1L3133.5,936.9L3127.3,936.3L3123.9,924.9ZM3193.3,913.5L3210.3,910.1L3218.9,923.8L3233.1,914.1L3250.1,919.8L3272.9,930.6L3278.6,942.1L3287.1,949.5L3301.3,965.1L3284.3,962.2L3272.9,950.7L3264.4,957.6L3250.1,957.0L3238.8,951.2L3233.1,953.0L3235.9,947.8L3216.0,930.1L3204.6,928.3L3198.9,920.9L3204.6,918.1L3195.0,913.0ZM2902.6,867.9L2902.0,856.5L2904.8,849.0L2913.4,862.2L2912.2,869.1L2906.0,871.4ZM3093.7,1033.3L3097.7,1058.3L3102.2,1084.0L3102.2,1107.5L3116.5,1117.8L3150.6,1110.2L3164.8,1099.3L3184.7,1094.6L3198.9,1097.3L3216.0,1115.7L3231.4,1104.1L3233.1,1121.3L3244.5,1139.0L3264.4,1144.8L3280.3,1147.0L3301.3,1135.4L3308.7,1109.5L3321.3,1074.3L3318.4,1053.2L3305.9,1036.4L3295.7,1024.2L3280.3,1014.5L3275.2,991.3L3264.4,985.4L3258.7,966.2L3253.6,979.6L3253.0,1000.2L3241.6,1006.1L3231.4,998.4L3220.6,991.3L3226.3,974.9L3202.4,970.9L3193.3,975.5L3184.7,991.3L3169.9,984.3L3153.4,999.6L3143.2,1009.1L3136.4,1019.3L3123.9,1023.0L3111.9,1024.8L3096.5,1032.1ZM3270.6,1158.9L3291.7,1160.4L3290.0,1178.0L3275.7,1178.8Z" fill="#131313" stroke="#131313" stroke-width="1"/><path d="M2714.2,621.7L2718.2,613.7L2726.8,605.5L2738.1,601.3L2749.5,603.0L2750.7,615.3L2739.8,621.7L2735.3,623.3L2738.1,633.5L2748.4,641.3L2748.4,648.8L2754.1,651.9L2748.9,657.1L2754.6,664.4L2754.6,676.0L2741.0,679.6L2726.8,673.9L2725.6,667.3L2728.5,656.3L2734.2,654.1L2726.8,645.1L2721.1,637.4L2718.2,633.5L2716.5,625.7ZM2613.0,647.3L2627.2,647.3L2638.6,641.3L2647.1,640.5L2655.6,646.6L2667.0,649.6L2675.6,649.6L2684.7,644.3L2684.1,637.4L2675.6,630.4L2667.0,621.7L2661.3,620.1L2656.2,615.3L2650.0,617.7L2638.6,621.7L2632.9,614.5L2638.6,609.6L2627.2,604.7L2622.7,605.5L2617.0,616.1L2610.7,624.1L2606.7,635.1L2607.3,644.3ZM2647.1,613.7L2650.0,605.5L2660.2,600.5L2671.6,599.7L2665.3,607.1L2661.3,615.3L2656.2,614.5ZM2644.3,390.3L2632.9,400.3L2646.0,420.6L2661.3,429.8L2675.6,420.6L2681.2,397.4L2698.3,397.4L2695.5,371.1L2681.2,386.0L2664.2,397.4ZM2618.7,347.6L2635.7,350.8L2652.8,355.6L2681.2,371.1L2698.3,363.4L2715.4,374.1L2749.5,363.4L2760.9,368.1L2789.3,358.7L2823.5,350.8L2834.9,368.1L2840.5,339.3L2857.6,355.6L2869.0,371.1L2874.7,304.4L2618.7,304.4ZM1924.0,603.0L1938.8,592.9L1955.9,586.1L1965.6,601.3L1955.9,605.5L1944.5,598.8ZM1948.5,641.3L1949.6,621.7L1953.1,610.4L1964.4,609.6L1955.9,629.6L1956.5,641.3ZM1967.3,611.2L1984.3,610.4L1992.9,621.7L1978.7,633.5L1973.0,625.7ZM1973.0,643.5L1998.6,635.1L1999.1,637.4L1984.3,645.1ZM1994.0,631.2L2014.5,624.1L2012.8,631.2ZM1782.4,464.2L1805.1,452.3L1819.4,442.4L1799.5,460.6ZM1736.9,414.0L1759.6,388.9L1776.7,396.0L1765.3,411.3ZM1890.5,571.1L1899.0,571.1L1896.2,538.6L1884.8,543.4ZM1755,340 L1755,358 L1792,362.7 L1832,376 L1870,369.4 L1903,385 L1925,371.6 L1958.5,382.7 L1976,365 L1980.7,340Z" fill="url(#wave)" stroke="#656565" stroke-width="2.5"/><path d="M1746.5,584.3L1906.4,584.3L1906.4,580.8L1938.3,592.9L1967.3,605.5L1978.7,615.3L1979.2,633.5L1998.6,632.0L2011.1,628.8L2023.0,617.7L2041.2,617.7L2049.8,603.8L2054.3,598.0L2062.3,600.5L2062.3,612.0L2066.8,619.3M1781.8,709.3L1795.5,708.0L1816.5,717.4L1832.5,717.4L1832.5,714.0L1842.1,714.0L1853.5,728.6L1862.0,732.5L1871.1,727.3L1881.9,742.2L1895.0,752.4M1923.5,821.6L1923.5,816.9L1928.0,812.2L1933.7,812.2L1933.1,802.1L1941.1,802.1L1945.7,797.9M1940.5,802.1L1940.5,813.4L1946.2,814.5M1940.5,813.4L1940.5,822.2L1935.4,826.3M1940.5,822.2L1948.5,828.1M1951.4,831.0L1960.5,825.1L1966.1,818.7L1974.7,818.7M1960.5,840.9L1971.8,842.6M1976.4,858.8L1978.1,850.1M2007.7,855.9L2004.8,863.9M2038.4,837.4L2035.5,841.5L2036.1,858.2L2044.1,865.7L2064.0,869.7L2062.3,879.4L2065.1,891.9L2067.4,898.2M1998.6,897.0L2007.7,902.7L2019.6,905.6L2031.6,915.2L2049.2,920.9L2050.3,928.9L2053.2,911.3L2050.9,895.3L2067.4,898.2L2082.8,896.5L2087.3,892.5L2080.5,881.7L2090.7,882.2L2102.7,875.4L2106.1,856.5M2122.6,870.8L2118.0,882.2L2122.6,893.6M2102.7,875.4L2107.8,881.1L2108.4,894.8L2122.6,893.6L2139.7,892.5L2154.4,881.1M2140.8,872.5L2139.7,892.5M1991.2,924.4L1998.6,932.9L2002.6,924.9L2019.6,905.6M2050.3,928.9L2032.7,946.6L2035.0,959.3L2046.9,959.3L2046.4,968.0L2052.6,967.4L2056.6,978.4L2052.6,994.3L2052.0,1004.9L2053.2,1007.3L2047.5,1011.5M2052.6,967.4L2075.9,961.0L2078.2,973.2L2095.3,983.1L2103.8,984.3L2105.5,999.0L2116.3,999.0L2116.9,1020.0M2053.2,1007.3L2058.3,1018.1L2060.0,1030.3L2065.7,1038.3L2075.4,1034.0L2091.9,1034.6L2097.0,1021.2L2116.9,1020.0M2065.7,1038.3L2058.9,1048.8L2057.7,1064.6L2049.8,1084.0L2049.8,1104.1L2046.9,1124.8L2043.5,1146.3L2040.1,1168.7L2041.2,1192.3M2091.9,1034.6L2106.7,1045.7L2120.3,1054.5L2114.6,1066.5L2131.1,1067.2L2137.4,1055.7L2133.4,1045.7L2130.6,1035.2L2119.2,1034.0L2116.9,1020.0M2137.4,1055.7L2141.9,1065.9L2130.6,1073.0L2120.3,1085.4L2129.4,1090.0L2144.2,1108.8M2120.3,1085.4L2116.9,1100.7L2115.8,1110.9M2436.6,691.5L2438.3,702.5L2441.2,712.0L2427.5,714.7L2419.6,726.6L2398.5,734.4L2398.5,743.5L2398.5,751.7L2379.7,751.7L2379.7,767.4L2373.5,771.7L2374.0,780.9L2351.3,780.9M2398.5,743.5L2420.7,758.0L2454.8,784.6L2466.2,794.3L2472.5,793.7M2354.1,812.2L2368.4,809.2L2378.6,819.9L2382.6,815.7L2416.7,815.7L2417.8,811.6L2413.9,782.8L2420.7,758.0M2496.9,678.9L2494.6,692.2L2490.7,699.8L2499.8,712.0L2502.0,724.6L2504.9,756.2L2515.7,767.4L2490.7,784.0L2472.5,793.7L2468.5,815.1L2452.6,819.9M2590.2,715.4L2590.2,776.7L2657.9,776.7M2590.2,776.7L2590.2,788.8L2584.5,788.8L2584.5,791.9L2538.5,768.0L2515.7,767.4M2584.5,791.9L2582.3,814.5L2574.9,832.7L2578.3,840.3L2572.6,844.9M2538.5,768.0L2536.2,785.8L2524.8,824.6M2468.5,838.0L2487.8,830.4L2519.1,827.5L2525.4,826.3M2417.3,845.5L2432.1,842.0L2452.6,819.9M2496.4,879.4L2502.0,867.9L2513.4,865.7L2522.0,850.7L2530.5,839.1L2525.4,826.3M2530.5,839.1L2536.2,861.6L2553.2,854.7L2572.6,844.9L2586.2,857.6L2603.9,875.9M2530.5,876.5L2553.8,880.5L2576.0,881.1L2603.9,875.9M2578.3,840.3L2601.6,850.1L2618.7,848.4L2640.3,850.7L2641.4,844.9M2667.0,800.9L2655.6,822.8L2647.1,832.2L2643.1,844.4L2640.3,850.7L2640.3,858.2L2646.5,867.4L2652.2,876.5L2675.0,882.8L2686.4,882.2L2704.0,876.5L2721.1,859.3L2698.3,853.6L2691.5,842.6L2693.8,833.3M2686.4,882.2L2681.2,914.7M2641.4,881.1L2647.1,896.5L2641.4,910.7L2661.3,924.9L2671.0,931.8M2677.8,965.1L2664.2,969.1L2647.1,971.4L2644.8,970.9M2603.9,875.9L2621.5,885.1L2616.4,913.0L2614.1,930.6L2621.5,953.5L2610.1,953.5L2618.7,973.8M2503.8,892.5L2512.3,891.9L2539.0,893.6L2553.2,885.1M2547.6,910.7L2539.0,922.1L2522.0,931.8M2517.4,939.2L2541.9,939.2L2548.1,950.7L2573.2,944.9L2584.5,967.4L2573.2,968.0L2573.2,979.6L2573.2,997.2L2581.7,1006.1M2515.1,1004.4L2566.3,1006.1L2581.7,1006.1L2607.3,1000.2L2620.9,994.9M2561.8,1033.3L2561.8,1050.1L2561.8,1073.6L2541.9,1074.9M2561.8,1050.1L2593.1,1055.1L2614.7,1034.6L2595.9,1009.1M2635.2,1058.3L2629.5,1045.7L2625.5,1035.2L2635.2,1027.2L2635.2,1000.2L2620.9,994.9M2635.7,958.7L2644.8,970.9L2651.1,990.1L2648.3,1003.8L2635.7,985.4M2430.4,875.9L2432.1,842.0M2454.8,870.2L2448.0,842.0M2463.4,868.5L2468.5,838.0M2405.3,879.9L2399.6,862.2L2402.5,847.8M2382.6,865.7L2388.3,856.5L2372.3,850.7M2353.0,833.3L2371.2,833.3L2378.6,819.9M2402.5,847.8L2417.3,845.5M2372.3,850.7L2385.4,833.9L2399.6,836.2M2437.8,630.4L2466.2,638.2M2397.4,642.0L2411.0,642.0L2408.2,660.0L2405.9,676.7M2462.2,565.7L2471.9,575.6L2482.7,580.0L2494.6,584.3L2491.2,596.3L2482.1,608.0L2487.8,613.7L2490.7,627.3M2487.8,543.4L2482.7,560.2L2482.1,568.4L2482.7,580.0M2470.8,561.2L2479.3,563.9L2482.1,568.4M2528.8,539.5L2531.1,552.8L2533.3,566.6L2516.8,572.9L2526.5,586.9L2522.0,597.1L2502.6,597.1L2491.2,596.3M2487.8,610.4L2507.7,603.0L2519.1,601.3L2525.9,605.5L2525.9,612.9M2533.3,566.6L2541.9,572.9L2555.0,580.0L2576.0,583.5M2576.0,583.5L2585.1,571.1L2581.7,554.7L2581.7,539.5L2577.7,534.7L2559.5,534.7M2577.7,534.7L2568.6,526.8M2567.5,517.7L2598.8,521.8M2586.2,498.9L2603.9,502.1M2607.3,481.4L2605.6,505.3L2608.4,516.7L2628.3,556.6L2647.1,555.6L2665.3,575.6L2676.1,579.1L2665.3,600.5M2581.7,557.5L2628.3,556.6M2581.7,539.5L2598.8,521.8L2608.4,516.7M2573.7,589.5L2599.3,591.2L2614.1,593.8L2618.7,606.3L2608.4,613.7M2573.7,589.5L2563.5,608.8L2577.1,621.7L2606.7,625.7L2610.7,628.1M2544.1,587.8L2555.0,594.6L2573.7,589.5M2539.6,602.2L2547.6,610.4L2558.4,616.1L2563.5,608.8M2525.9,605.5L2539.6,602.2L2544.1,587.8M2536.2,615.3L2556.1,618.5L2558.4,641.3M2561.8,637.4L2575.4,638.9M2565.2,648.8L2598.2,643.5M2578.3,646.6L2595.9,650.4M2595.9,650.4L2599.3,642.0L2607.3,641.3M2512.9,485.8L2519.1,464.2L2517.4,433.6L2530.5,407.2L2541.9,378.6L2561.8,355.6M2584.5,403.0L2581.7,378.6L2567.5,355.6M2607.3,470.0L2618.7,458.3L2615.8,427.2L2618.7,400.3L2610.1,363.4L2610.1,347.6M2721.1,609.6L2723.9,592.9L2712.5,584.3L2721.1,571.1L2732.4,562.1L2760.9,571.1L2778.0,566.6L2795.0,568.4L2795.0,552.8L2789.3,538.6L2817.8,532.7L2840.5,524.8L2851.9,528.8L2866.1,538.6L2883.2,538.6L2886.1,566.6L2903.1,568.4L2923.0,566.6L2942.9,582.6M2947.5,582.6L2960.0,571.1L2971.4,568.4L3005.5,557.5L3008.4,571.1L3028.3,572.9L3051.0,572.9L3062.4,581.7L3096.5,572.9L3111.9,577.3M3111.9,577.3L3127.8,554.7L3142.1,545.3L3170.5,552.8L3187.6,584.3L3207.5,591.2L3216.0,589.5L3205.8,617.7L3193.3,619.3L3193.8,634.3L3191.0,638.2M2947.5,582.6L2965.7,605.5L2962.9,617.7L2991.3,624.1L2999.8,635.1L3022.6,637.4L3045.3,644.3L3073.8,635.9L3085.2,628.1L3099.4,619.3L3116.5,605.5L3130.1,603.8L3122.1,593.8L3111.9,577.3M2943.5,582.6L2931.6,601.3L2917.3,615.3L2903.7,636.6L2880.4,649.6L2867.3,660.0L2873.5,677.4M3155.1,657.1L3167.7,645.1L3177.9,641.3L3191.0,638.2M3159.7,671.0L3177.9,667.3M2749.5,641.3L2766.6,646.6L2766.6,617.7L2786.5,613.7L2795.0,622.5L2814.9,628.1L2823.5,634.3L2837.7,651.9L2851.9,639.7L2869.0,632.0L2903.7,636.6M2754.6,676.0L2772.3,669.5L2792.2,681.0L2796.2,688.0L2812.1,678.1L2826.3,675.3L2846.2,671.0L2854.8,680.3L2873.5,677.4M2796.2,688.0L2797.9,716.0L2794.5,727.3L2803.6,729.9L2798.4,756.8M2873.5,677.4L2854.8,683.1L2851.9,699.1L2841.7,719.4L2826.3,726.6L2803.6,729.9M2890.6,688.7L2871.8,707.3L2871.8,719.4L2851.9,739.0L2846.2,748.6L2843.4,763.0L2836.0,766.2M2890.6,688.7L2903.1,709.3L2897.4,718.0L2908.8,724.6L2925.9,735.1L2949.8,739.6L2971.4,740.3L2991.3,731.2L3002.1,737.7M2903.7,733.8L2921.9,743.5L2949.8,749.2M2949.8,749.2L2958.9,751.7L2971.4,758.0L2974.2,773.6L2978.8,764.3L2986.2,756.8L3002.1,737.7M2954.3,778.5L2951.5,764.3L2949.8,749.2M3002.1,737.7L3009.5,752.4L3004.4,764.9L3014.1,776.0L3023.7,781.5L3028.8,774.2L3047.1,768.6L3055.0,771.7L3062.4,779.7M3023.7,781.5L3017.5,786.4L3006.7,790.7L3001.5,797.9L3010.6,811.6L3006.7,818.1L3011.8,829.2L3008.9,844.9M3017.5,786.4L3024.3,791.3L3028.8,800.9L3044.2,809.8L3048.8,818.7L3034.0,823.4L3030.0,835.1M3028.8,774.2L3042.5,785.8L3044.8,800.9L3059.6,815.7L3059.6,821.6L3051.0,840.9L3042.5,845.5M3018.0,867.9L3025.4,871.9L3029.4,869.7M2653.9,681.0L2664.2,679.6L2689.2,677.4L2702.9,676.7L2701.2,658.6L2696.0,648.1L2684.7,644.3M2675.6,630.4L2692.6,635.1L2706.8,637.4L2712.5,642.0L2723.9,642.8M2696.0,648.1L2706.8,649.6L2712.5,664.4L2721.1,668.1M2702.9,676.7L2709.7,689.4L2706.8,699.1L2718.8,707.3L2723.9,726.0M2689.2,677.4L2682.4,696.4L2669.9,710.7L2658.5,716.0L2647.1,729.2M2669.9,710.7L2702.3,731.2L2712.5,731.8L2721.1,732.5M2691.5,809.8L2712.5,805.1L2743.8,794.9L2763.7,772.3L2762.0,764.3M2743.8,794.9L2750.1,809.2M2642.6,717.4L2646.5,729.2M2652.2,689.4L2655.6,705.9L2650.0,705.9M3099.4,896.5L3105.1,882.2L3116.5,881.1M3250.1,919.8L3250.1,957.0" fill="none" stroke="#b9b9b9" stroke-width="2.6" stroke-linejoin="round" opacity="0.9"/><circle cx="2461.1" cy="588.1" r="19.8" fill="#c4a75d" stroke="#c6a23e" stroke-width="3"/><circle cx="2665.5" cy="595.4" r="19.8" fill="#c4a75d" stroke="#c6a23e" stroke-width="3"/><circle cx="2611" cy="626.9" r="17.7" fill="#c4a75d" stroke="#c6a23e" stroke-width="3"/><circle cx="2029.5" cy="616.1" r="17.7" fill="#c4a75d" stroke="#c6a23e" stroke-width="3"/><circle cx="1999.2" cy="636.5" r="17.7" fill="#c4a75d" stroke="#c6a23e" stroke-width="3"/><circle cx="2006.8" cy="666.2" r="15.6" fill="#c4a75d" stroke="#c6a23e" stroke-width="3"/><circle cx="1891.3" cy="675.3" r="16" fill="#c4a75d" stroke="#c6a23e" stroke-width="3"/><circle cx="1963.3" cy="694.5" r="16" fill="#c4a75d" stroke="#c6a23e" stroke-width="3"/><circle cx="1757" cy="676.7" r="16" fill="#c4a75d" stroke="#c6a23e" stroke-width="3"/><circle cx="3168.8" cy="677.7" r="15.9" fill="#c4a75d" stroke="#c6a23e" stroke-width="3"/><circle cx="3054.7" cy="845.8" r="13.9" fill="#c4a75d" stroke="#c6a23e" stroke-width="3"/><circle cx="3056.4" cy="943.7" r="11.9" fill="#c4a75d" stroke="#c6a23e" stroke-width="3"/><circle cx="2171.6" cy="1031.5" r="14.5" fill="#c4a75d" stroke="#c6a23e" stroke-width="3"/><circle cx="2554.1" cy="537.3" r="21.7" fill="#761430" stroke="#520012" stroke-width="3"/><circle cx="2656.6" cy="529.6" r="21.9" fill="#c57b3b" stroke="#c46a14" stroke-width="3"/></g><rect x="1780.3" y="365.7" width="51.2" height="103.6" rx="7" fill="#333"/><path d="M1780.3,417.5 H1831.5" stroke="#444" stroke-width="1.5"/><path d="M1795.5,394 H1816.5 M1806,383.5 V404.5" stroke="#dcdcdc" stroke-width="4.4"/><path d="M1798,445.5 H1814" stroke="#dcdcdc" stroke-width="4.4"/><rect x="1780.3" y="490" width="51.2" height="51.5" rx="7" fill="#333"/><path d="M1800,505 V523.5 H1818 M1795,511 H1812 V529" fill="none" stroke="#dcdcdc" stroke-width="3"/><path d="M1799,526 L1817,506" stroke="#dcdcdc" stroke-width="1.2"/><rect x="1780.3" y="561.8" width="51.2" height="103.8" rx="7" fill="#333"/><path d="M1780.3,612.8 H1831.5" stroke="#444" stroke-width="1.5"/><path d="M1805.9,578.5 L1818,585.5 L1816,599 L1800.5,600 L1794,586.5 Z" fill="#dcdcdc"/><rect x="1796" y="630" width="20.1" height="20.1" fill="#dcdcdc"/><rect x="3063.7" y="879.7" width="244.1" height="234" rx="6" fill="#2a2a2a" opacity="0.14"/><text x="3080" y="918.9" font-size="21.5" font-weight="700" fill="#b0b0b0">Count</text><circle cx="3090.2" cy="944.2" r="8.6" fill="#fed976" stroke="#c8a440" stroke-width="2"/><text x="3108.2" y="953.8" font-size="22" fill="#a3a3a3">3 – 2,729.4</text><circle cx="3090.2" cy="978.2" r="8.6" fill="#fd9a45" stroke="#c86a1a" stroke-width="2"/><text x="3108.2" y="987.8" font-size="22" fill="#a3a3a3">2,729.4 – 5,455.8</text><circle cx="3090.2" cy="1012.2" r="8.6" fill="#fc4e2a" stroke="#b01515" stroke-width="2"/><text x="3108.2" y="1021.8" font-size="22" fill="#a3a3a3">5,455.8 – 8,182.2</text><circle cx="3090.2" cy="1046.2" r="8.6" fill="#d20f1f" stroke="#8a0000" stroke-width="2"/><text x="3108.2" y="1055.8" font-size="22" fill="#a3a3a3">8,182.2 – 10,908.6</text><circle cx="3090.2" cy="1080.2" r="8.6" fill="#800026" stroke="#4a0010" stroke-width="2"/><text x="3108.2" y="1089.8" font-size="22" fill="#a3a3a3">10,908.6 – 13,635</text><rect x="2786" y="1134" width="542" height="31.5" fill="#424242" opacity="0.9"/><rect x="2819" y="1138" width="157" height="24" fill="#383838"/><rect x="3112" y="1138" width="206" height="24" fill="#383838"/><text x="2794" y="1158" font-size="22" fill="#9a9a9a">©</text><text x="2819.5" y="1158" font-size="22" fill="#efefef">OpenStreetMap</text><text x="2982" y="1158" font-size="22.5" fill="#9a9a9a">contributors,</text><text x="3113" y="1158" font-size="22" fill="#efefef">Elastic Maps Service</text><text x="126" y="40.5" font-size="29.5" fill="#4da1c0" text-anchor="start" font-weight="400" >Dashboard</text><text x="282" y="40.5" font-size="29.5" fill="#9a9a9a" text-anchor="start" font-weight="400" >/</text><text x="308" y="40.5" font-size="30" fill="#e0e0e0" text-anchor="start" font-weight="400" >Heralding</text><path d="M153,90 L165,100 L153,110" fill="none" stroke="#e8e8e8" stroke-width="2.2"/><rect x="168" y="108.5" width="12" height="2.4" fill="#e8e8e8"/><text x="206" y="110" font-size="28.3" fill="#8c8c8c" text-anchor="start" font-weight="400" >Search... (e.g. status:200 AND extension:PHP)</text><text x="2966" y="110" font-size="29.5" fill="#4da1c0" text-anchor="start" font-weight="400" >Options</text><text x="3177" y="108" font-size="28.5" fill="#1a1a1a" text-anchor="start" font-weight="400" >Refresh</text><text x="133" y="202" font-size="27.2" fill="#4da1c0" text-anchor="start" font-weight="400" >Add a filter</text><path d="M269,192.5 H289 M279,182.5 V202.5" stroke="#4da1c0" stroke-width="5"/><text x="2260" y="40.5" font-size="29" fill="#e6e6e6" text-anchor="start" font-weight="400" >Full screen</text><text x="2443" y="40.5" font-size="29" fill="#e6e6e6" text-anchor="start" font-weight="400" >Share</text><text x="2562" y="40.5" font-size="29" fill="#e6e6e6" text-anchor="start" font-weight="400" >Clone</text><text x="2681" y="40.5" font-size="29" fill="#e6e6e6" text-anchor="start" font-weight="400" >Edit</text><text x="2806" y="40.5" font-size="29" fill="#e6e6e6" text-anchor="start" font-weight="400" >Auto-refresh</text><text x="3114" y="40.5" font-size="29" fill="#e6e6e6" text-anchor="start" font-weight="400" >Last 30 days</text><path d="M2795.5,22.5 A10.5,10.5 0 1 0 2797.5,34" fill="none" stroke="#e6e6e6" stroke-width="4.2"/><path d="M2788,17 L2800,15 L2799,28 Z" fill="#e6e6e6"/><path d="M3033,18 L3022,29.5 L3033,41" fill="none" stroke="#e6e6e6" stroke-width="5"/><path d="M3320,18 L3331,29.5 L3320,41" fill="none" stroke="#e6e6e6" stroke-width="5"/><circle cx="3091.5" cy="29.5" r="9.8" fill="none" stroke="#e6e6e6" stroke-width="3.2"/><path d="M3091.5,23 V30 H3097" fill="none" stroke="#e6e6e6" stroke-width="2.6"/><path d="M20,31 H90 V59 H86 C85,49 80,45 70,45 H67 V101 C67,104 69,104 72,104 H76 V109 H33 V104 H37 C41,104 45,104 45,101 V45 H41 C30,45 25,49 24,59 H20 Z" fill="#fff"/><rect x="20" y="67" width="17" height="15.5" fill="#fff"/><rect x="72.5" y="67" width="17.5" height="15.5" fill="#fff"/><circle cx="54" cy="178" r="15.8" fill="none" stroke="#fff" stroke-width="4.5"/><path d="M45,187 L50.5,173 L63,169 L57.5,183 Z" fill="#fff"/><circle cx="54" cy="178" r="2.3" fill="#e20074"/><path d="M36,236 H40.5 V263 H72 V267.5 H36 Z" fill="#fff"/><rect x="45" y="245" width="9" height="13.5" fill="#fff"/><rect x="58.4" y="236" width="9.3" height="22.5" fill="#fff"/><circle cx="54" cy="330" r="15.6" fill="none" stroke="#fff" stroke-width="4.5"/><path d="M45.5,323 L54,334" stroke="#fff" stroke-width="4.5" stroke-linecap="round"/><circle cx="54" cy="335" r="4.8" fill="#fff"/><circle cx="54" cy="322.8" r="2.4" fill="#fff"/><circle cx="60.5" cy="327.8" r="2.4" fill="#fff"/><path d="M38,395 C36,391 41,391 44,393 C50,391 58,391 64,393 C67,391 72,391 70,395 C71,399 71,410 68,414 C65,419 60,420 54,420 C48,420 43,419 40,414 C37,410 37,399 38,395 Z" fill="#fff"/><path d="M45,400 L50,403 M63,400 L58,403" stroke="#e20074" stroke-width="2"/><path d="M51,405 H57 L54,408 Z" fill="#e20074"/><ellipse cx="54" cy="412.5" rx="5.5" ry="3.5" fill="#e20074"/><path d="M66,464 C59,463 54.5,470 57,476 L38.5,494.5 C36,497 36.5,500 38.5,501.5 C40.5,503 43,503 45.5,500.5 L64,482 C70,484.5 77,480 76,473 L71.5,477 L66.5,476.5 L64,472 L66,464 Z" fill="#fff"/><circle cx="41.5" cy="498.5" r="2" fill="#e20074"/><path d="M54,548 C51,542 43,541 39,545.5 C35,550 36,556 39.5,560.5 L54,576 L68.5,560.5 C72,556 73,550 69,545.5 C65,541 57,542 54,548 Z" fill="#fff"/><path d="M37,562.5 H45 L48,557 L52,567 L57,550 L61.5,562.5 H71" fill="none" stroke="#e20074" stroke-width="1.8"/><path d="M50.2,621.4 L52.2,616.1 L55.8,616.1 L57.8,621.4 L60.2,622.4 L65.4,620.1 L67.9,622.6 L65.6,627.8 L66.6,630.2 L71.9,632.2 L71.9,635.8 L66.6,637.8 L65.6,640.2 L67.9,645.4 L65.4,647.9 L60.2,645.6 L57.8,646.6 L55.8,651.9 L52.2,651.9 L50.2,646.6 L47.8,645.6 L42.6,647.9 L40.1,645.4 L42.4,640.2 L41.4,637.8 L36.1,635.8 L36.1,632.2 L41.4,630.2 L42.4,627.8 L40.1,622.6 L42.6,620.1 L47.8,622.4 Z M60.6,634 A6.6,6.6 0 1 0 47.4,634 A6.6,6.6 0 1 0 60.6,634 Z" fill="#fff" fill-rule="evenodd"/><circle cx="54" cy="1698" r="18" fill="#fff"/><path d="M49.2,1689 L49.2,1706.8 L62.6,1698 Z" fill="#e20074"/><text x="140" y="290" font-size="29.2" fill="#8f8f8f" text-anchor="start" font-weight="400" >Heralding Attacks Bar</text><text x="1083" y="290" font-size="29.2" fill="#8f8f8f" text-anchor="start" font-weight="400" >Heralding Attacks</text><text x="1758.5" y="290" font-size="29.4" fill="#8f8f8f" text-anchor="start" font-weight="400" >Heralding Attack Map</text><text x="139" y="627" font-size="29.4" fill="#8f8f8f" text-anchor="start" font-weight="400" >Heralding Attacks Histogram</text><text x="139" y="1243" font-size="29.4" fill="#8f8f8f" text-anchor="start" font-weight="400" >Heralding Protocols Histogram</text><text x="1758.5" y="1243" font-size="29.4" fill="#8f8f8f" text-anchor="start" font-weight="400" >Heralding - Attacks by Country Histogram</text><rect x="142" y="366" width="521" height="57" fill="#52a46d"/><rect x="142" y="423" width="18" height="55" fill="#6674b6"/><path d="M142,480 H687" stroke="#e6e6e6" stroke-width="2.2"/><path d="M143,480 V492" stroke="#e6e6e6" stroke-width="2.2"/><path d="M414,480 V492" stroke="#e6e6e6" stroke-width="2.2"/><path d="M527,480 V492" stroke="#e6e6e6" stroke-width="2.2"/><path d="M613,480 V492" stroke="#e6e6e6" stroke-width="2.2"/><path d="M686,480 V492" stroke="#e6e6e6" stroke-width="2.2"/><text x="414" y="512.5" font-size="21.5" fill="#ababab" text-anchor="middle" font-weight="400" >5,000</text><text x="527" y="512.5" font-size="21.5" fill="#ababab" text-anchor="middle" font-weight="400" >10,000</text><text x="613" y="512.5" font-size="21.5" fill="#ababab" text-anchor="middle" font-weight="400" >15,000</text><circle cx="710" cy="380.5" r="13.8" fill="#5c5c5c"/><path d="M706.5,374 L713.5,380.5 L706.5,387" fill="none" stroke="#222" stroke-width="4.2"/><circle cx="748" cy="375.5" r="10.2" fill="#57c17b"/><text x="765" y="384.5" font-size="25" fill="#c8c8c8" text-anchor="start" font-weight="400" >Attacks</text><circle cx="748" cy="413.5" r="10.2" fill="#6f87d8"/><text x="765" y="422.5" font-size="25" fill="#c8c8c8" text-anchor="start" font-weight="400" >Unique Src IPs</text><text x="1271" y="464" font-size="83" fill="#e3e3e3" text-anchor="middle" font-weight="700" >18,349</text><text x="1269.5" y="498" font-size="29" fill="#e3e3e3" text-anchor="middle" font-weight="400" >Attacks</text><text x="1547.5" y="464" font-size="80.5" fill="#e3e3e3" text-anchor="middle" font-weight="700" >21</text><text x="1552.5" y="498" font-size="28" fill="#e3e3e3" text-anchor="middle" font-weight="400" >Unique Src IPs</text><path d="M224,701.5 V1073.1 M212,701.5 H224" fill="none" stroke="#e6e6e6" stroke-width="2.2"/><path d="M212,1061.6 H1362 V1073.1" fill="none" stroke="#e6e6e6" stroke-width="2.2"/><path d="M212,1061.6 H224" stroke="#e6e6e6" stroke-width="2.2"/><text x="205" y="1069.1" font-size="21.5" fill="#ababab" text-anchor="end" font-weight="400" >0</text><path d="M212,891.7 H224" stroke="#e6e6e6" stroke-width="2.2"/><text x="205" y="899.2" font-size="21.5" fill="#ababab" text-anchor="end" font-weight="400" >2,000</text><path d="M212,821.3 H224" stroke="#e6e6e6" stroke-width="2.2"/><text x="205" y="828.8" font-size="21.5" fill="#ababab" text-anchor="end" font-weight="400" >4,000</text><path d="M212,767.3 H224" stroke="#e6e6e6" stroke-width="2.2"/><text x="205" y="774.8" font-size="21.5" fill="#ababab" text-anchor="end" font-weight="400" >6,000</text><path d="M212,721.7 H224" stroke="#e6e6e6" stroke-width="2.2"/><text x="205" y="729.2" font-size="21.5" fill="#ababab" text-anchor="end" font-weight="400" >8,000</text><path d="M339.5,1061.6 V1073.1" stroke="#e6e6e6" stroke-width="2.2"/><text x="339.5" y="1095.1" font-size="21.7" fill="#ababab" text-anchor="middle" font-weight="400" >2018-10-28 02:00</text><path d="M605,1061.6 V1073.1" stroke="#e6e6e6" stroke-width="2.2"/><text x="605" y="1095.1" font-size="21.7" fill="#ababab" text-anchor="middle" font-weight="400" >2018-11-04 01:00</text><path d="M870.4,1061.6 V1073.1" stroke="#e6e6e6" stroke-width="2.2"/><text x="870.4" y="1095.1" font-size="21.7" fill="#ababab" text-anchor="middle" font-weight="400" >2018-11-11 01:00</text><path d="M1136,1061.6 V1073.1" stroke="#e6e6e6" stroke-width="2.2"/><text x="1136" y="1095.1" font-size="21.7" fill="#ababab" text-anchor="middle" font-weight="400" >2018-11-18 01:00</text><text x="792.7" y="1133.5" font-size="26" fill="#b9b9b9" text-anchor="middle" font-weight="700" >Timestamp</text><path d="M261.1,1057.4 L280.2,1051.7 L299.1,1050.3 L318.2,1054 L337.3,1054 L356.7,1054 L376.7,1052.6 L414.1,1011.7 L433.2,1011.7 L471.2,1052 L490.1,1048.3 L603.7,1057.4 L622.8,1047.7 L641.4,942.4 L660.2,815.6 L679.6,712.8 L735.9,1052 L755,1052 L774.1,1044 L793,1047 L849.2,1051.5 L887.7,1048.4 L906.5,1051.2 L944.8,1049.2 L963.4,867 L982.2,1051.2 L1020.5,1052.1 L1039.3,920.7 L1058.4,1054.1 L1077,1036.1 L1096.1,1052.7 L1171.8,1051.5 L1209.8,1051.5 L1228.3,1052.7 L1266.3,1031.2 L1323.4,1053.2" fill="none" stroke="#57c17b" stroke-width="3.6" stroke-linejoin="round"/><circle cx="261.1" cy="1057.4" r="4.6" fill="#57c17b"/><circle cx="280.2" cy="1051.7" r="4.6" fill="#57c17b"/><circle cx="299.1" cy="1050.3" r="4.6" fill="#57c17b"/><circle cx="318.2" cy="1054" r="4.6" fill="#57c17b"/><circle cx="337.3" cy="1054" r="4.6" fill="#57c17b"/><circle cx="356.7" cy="1054" r="4.6" fill="#57c17b"/><circle cx="376.7" cy="1052.6" r="4.6" fill="#57c17b"/><circle cx="414.1" cy="1011.7" r="4.6" fill="#57c17b"/><circle cx="433.2" cy="1011.7" r="4.6" fill="#57c17b"/><circle cx="471.2" cy="1052" r="4.6" fill="#57c17b"/><circle cx="490.1" cy="1048.3" r="4.6" fill="#57c17b"/><circle cx="603.7" cy="1057.4" r="4.6" fill="#57c17b"/><circle cx="622.8" cy="1047.7" r="4.6" fill="#57c17b"/><circle cx="641.4" cy="942.4" r="4.6" fill="#57c17b"/><circle cx="660.2" cy="815.6" r="4.6" fill="#57c17b"/><circle cx="679.6" cy="712.8" r="4.6" fill="#57c17b"/><circle cx="735.9" cy="1052" r="4.6" fill="#57c17b"/><circle cx="755" cy="1052" r="4.6" fill="#57c17b"/><circle cx="774.1" cy="1044" r="4.6" fill="#57c17b"/><circle cx="793" cy="1047" r="4.6" fill="#57c17b"/><circle cx="849.2" cy="1051.5" r="4.6" fill="#57c17b"/><circle cx="887.7" cy="1048.4" r="4.6" fill="#57c17b"/><circle cx="906.5" cy="1051.2" r="4.6" fill="#57c17b"/><circle cx="944.8" cy="1049.2" r="4.6" fill="#57c17b"/><circle cx="963.4" cy="867" r="4.6" fill="#57c17b"/><circle cx="982.2" cy="1051.2" r="4.6" fill="#57c17b"/><circle cx="1020.5" cy="1052.1" r="4.6" fill="#57c17b"/><circle cx="1039.3" cy="920.7" r="4.6" fill="#57c17b"/><circle cx="1058.4" cy="1054.1" r="4.6" fill="#57c17b"/><circle cx="1077" cy="1036.1" r="4.6" fill="#57c17b"/><circle cx="1096.1" cy="1052.7" r="4.6" fill="#57c17b"/><circle cx="1171.8" cy="1051.5" r="4.6" fill="#57c17b"/><circle cx="1209.8" cy="1051.5" r="4.6" fill="#57c17b"/><circle cx="1228.3" cy="1052.7" r="4.6" fill="#57c17b"/><circle cx="1266.3" cy="1031.2" r="4.6" fill="#57c17b"/><circle cx="1323.4" cy="1053.2" r="4.6" fill="#57c17b"/><path d="M261.1,1057.4 L280.2,1057.4 L299.1,1055.4 L318.2,1057.4 L337.3,1057.4 L356.7,1057.4 L376.7,1057.4 L414.1,1057.4 L433.2,1057.4 L471.2,1057.4 L490.1,1055.4 L603.7,1057.4 L622.8,1055.4 L641.4,1057.4 L660.2,1057.4 L679.6,1054 L735.9,1057.4 L755,1057.4 L774.1,1055.4 L793,1057.4 L849.2,1057.4 L887.7,1056.4 L906.5,1057.4 L944.8,1055.5 L963.4,1057.5 L982.2,1057.5 L1020.5,1057.5 L1039.3,1057.5 L1058.4,1057.5 L1077,1057.5 L1096.1,1054 L1171.8,1057.5 L1209.8,1057.5 L1228.3,1057.5 L1266.3,1057.5 L1323.4,1057.5" fill="none" stroke="#6f87d8" stroke-width="3.6" stroke-linejoin="round"/><circle cx="261.1" cy="1057.4" r="4.6" fill="#6f87d8"/><circle cx="280.2" cy="1057.4" r="4.6" fill="#6f87d8"/><circle cx="299.1" cy="1055.4" r="4.6" fill="#6f87d8"/><circle cx="318.2" cy="1057.4" r="4.6" fill="#6f87d8"/><circle cx="337.3" cy="1057.4" r="4.6" fill="#6f87d8"/><circle cx="356.7" cy="1057.4" r="4.6" fill="#6f87d8"/><circle cx="376.7" cy="1057.4" r="4.6" fill="#6f87d8"/><circle cx="414.1" cy="1057.4" r="4.6" fill="#6f87d8"/><circle cx="433.2" cy="1057.4" r="4.6" fill="#6f87d8"/><circle cx="471.2" cy="1057.4" r="4.6" fill="#6f87d8"/><circle cx="490.1" cy="1055.4" r="4.6" fill="#6f87d8"/><circle cx="603.7" cy="1057.4" r="4.6" fill="#6f87d8"/><circle cx="622.8" cy="1055.4" r="4.6" fill="#6f87d8"/><circle cx="641.4" cy="1057.4" r="4.6" fill="#6f87d8"/><circle cx="660.2" cy="1057.4" r="4.6" fill="#6f87d8"/><circle cx="679.6" cy="1054" r="4.6" fill="#6f87d8"/><circle cx="735.9" cy="1057.4" r="4.6" fill="#6f87d8"/><circle cx="755" cy="1057.4" r="4.6" fill="#6f87d8"/><circle cx="774.1" cy="1055.4" r="4.6" fill="#6f87d8"/><circle cx="793" cy="1057.4" r="4.6" fill="#6f87d8"/><circle cx="849.2" cy="1057.4" r="4.6" fill="#6f87d8"/><circle cx="887.7" cy="1056.4" r="4.6" fill="#6f87d8"/><circle cx="906.5" cy="1057.4" r="4.6" fill="#6f87d8"/><circle cx="944.8" cy="1055.5" r="4.6" fill="#6f87d8"/><circle cx="963.4" cy="1057.5" r="4.6" fill="#6f87d8"/><circle cx="982.2" cy="1057.5" r="4.6" fill="#6f87d8"/><circle cx="1020.5" cy="1057.5" r="4.6" fill="#6f87d8"/><circle cx="1039.3" cy="1057.5" r="4.6" fill="#6f87d8"/><circle cx="1058.4" cy="1057.5" r="4.6" fill="#6f87d8"/><circle cx="1077" cy="1057.5" r="4.6" fill="#6f87d8"/><circle cx="1096.1" cy="1054" r="4.6" fill="#6f87d8"/><circle cx="1171.8" cy="1057.5" r="4.6" fill="#6f87d8"/><circle cx="1209.8" cy="1057.5" r="4.6" fill="#6f87d8"/><circle cx="1228.3" cy="1057.5" r="4.6" fill="#6f87d8"/><circle cx="1266.3" cy="1057.5" r="4.6" fill="#6f87d8"/><circle cx="1323.4" cy="1057.5" r="4.6" fill="#6f87d8"/><circle cx="1386" cy="716.4" r="13.8" fill="#5c5c5c"/><path d="M1382.5,709.9 L1389.5,716.4 L1382.5,722.9" fill="none" stroke="#222" stroke-width="4.2"/><circle cx="1424" cy="711.3" r="10.2" fill="#57c17b"/><text x="1441" y="720.3" font-size="25" fill="#c8c8c8" text-anchor="start" font-weight="400" >Attacks</text><circle cx="1424" cy="749.5" r="10.2" fill="#6f87d8"/><text x="1441" y="758.5" font-size="25" fill="#c8c8c8" text-anchor="start" font-weight="400" >Unique Src IPs</text><path d="M224,1318 V1689.8 M212,1318 H224" fill="none" stroke="#e6e6e6" stroke-width="2.2"/><path d="M212,1678.3 H1362 V1689.8" fill="none" stroke="#e6e6e6" stroke-width="2.2"/><path d="M212,1678.3 H224" stroke="#e6e6e6" stroke-width="2.2"/><text x="205" y="1685.8" font-size="21.5" fill="#ababab" text-anchor="end" font-weight="400" >0</text><path d="M212,1508.4 H224" stroke="#e6e6e6" stroke-width="2.2"/><text x="205" y="1515.9" font-size="21.5" fill="#ababab" text-anchor="end" font-weight="400" >2,000</text><path d="M212,1438 H224" stroke="#e6e6e6" stroke-width="2.2"/><text x="205" y="1445.5" font-size="21.5" fill="#ababab" text-anchor="end" font-weight="400" >4,000</text><path d="M212,1384 H224" stroke="#e6e6e6" stroke-width="2.2"/><text x="205" y="1391.5" font-size="21.5" fill="#ababab" text-anchor="end" font-weight="400" >6,000</text><path d="M212,1338.4 H224" stroke="#e6e6e6" stroke-width="2.2"/><text x="205" y="1345.9" font-size="21.5" fill="#ababab" text-anchor="end" font-weight="400" >8,000</text><path d="M339.5,1678.3 V1689.8" stroke="#e6e6e6" stroke-width="2.2"/><text x="339.5" y="1711.8" font-size="21.7" fill="#ababab" text-anchor="middle" font-weight="400" >2018-10-28 02:00</text><path d="M605,1678.3 V1689.8" stroke="#e6e6e6" stroke-width="2.2"/><text x="605" y="1711.8" font-size="21.7" fill="#ababab" text-anchor="middle" font-weight="400" >2018-11-04 01:00</text><path d="M870.4,1678.3 V1689.8" stroke="#e6e6e6" stroke-width="2.2"/><text x="870.4" y="1711.8" font-size="21.7" fill="#ababab" text-anchor="middle" font-weight="400" >2018-11-11 01:00</text><path d="M1136,1678.3 V1689.8" stroke="#e6e6e6" stroke-width="2.2"/><text x="1136" y="1711.8" font-size="21.7" fill="#ababab" text-anchor="middle" font-weight="400" >2018-11-18 01:00</text><text x="792.7" y="1750" font-size="26" fill="#b9b9b9" text-anchor="middle" font-weight="700" >Timestamp</text><path d="M260.5,1677.2 L260.5,1674.5 L279.7,1674.5 L279.7,1666.9 L298.8,1666.9 L298.8,1665.4 L318.2,1665.4 L318.2,1669.7 L375.3,1669.7 L375.3,1667.7 L413.8,1667.7 L413.8,1626.3 L471.8,1626.3 L471.8,1666.9 L489.5,1666.9 L489.5,1663.4 L604.5,1663.4 L604.5,1673.4 L622.2,1673.4 L622.2,1663.1 L641.4,1663.1 L641.4,1557.8 L660.2,1557.8 L660.2,1430.5 L679.3,1430.5 L679.3,1328.6 L737,1328.6 L737,1666.9 L774.1,1666.9 L774.1,1658.8 L793.5,1658.8 L793.5,1661.7 L850,1661.7 L850,1666.9 L887.1,1666.9 L887.1,1663.5 L907.1,1663.5 L907.1,1666.9 L944.2,1666.9 L944.2,1664.7 L963.4,1664.7 L963.4,1482.8 L982.8,1482.8 L982.8,1666.1 L1020.5,1666.1 L1020.5,1666.9 L1039,1666.9 L1039,1536.4 L1058.4,1536.4 L1058.4,1669.8 L1077,1669.8 L1077,1651.8 L1096.1,1651.8 L1096.1,1667.8 L1171.8,1667.8 L1171.8,1666.4 L1210.4,1666.4 L1210.4,1667 L1228.9,1667 L1228.9,1667.8 L1324,1667.8 L1324,1677.2 Z" fill="#3d8a84" stroke="#48b0a6" stroke-width="2"/><path d="M679.3,1663 V1677" stroke="#7b3fd0" stroke-width="2.5"/><path d="M1266.9,1647 V1677" stroke="#9ac23c" stroke-width="2.5"/><circle cx="1386" cy="1332" r="13.8" fill="#5c5c5c"/><path d="M1382.5,1325.5 L1389.5,1332 L1382.5,1338.5" fill="none" stroke="#222" stroke-width="4.2"/><circle cx="1424" cy="1326.9" r="10.2" fill="#3ec5c0"/><text x="1441" y="1335.9" font-size="25" fill="#c8c8c8" text-anchor="start" font-weight="400" >vnc</text><circle cx="1424" cy="1365.1" r="10.2" fill="#8ec63f"/><text x="1441" y="1374.1" font-size="25" fill="#c8c8c8" text-anchor="start" font-weight="400" >telnet</text><circle cx="1424" cy="1403.3" r="10.2" fill="#7f3fc8"/><text x="1441" y="1412.3" font-size="25" fill="#c8c8c8" text-anchor="start" font-weight="400" >pop3</text><path d="M1844,1318 V1688.7 M1832,1318 H1844" fill="none" stroke="#e6e6e6" stroke-width="2.2"/><path d="M1832,1677.2 H2982 V1688.7" fill="none" stroke="#e6e6e6" stroke-width="2.2"/><path d="M1832,1677.2 H1844" stroke="#e6e6e6" stroke-width="2.2"/><text x="1825" y="1684.7" font-size="21.5" fill="#ababab" text-anchor="end" font-weight="400" >0</text><path d="M1832,1507.3 H1844" stroke="#e6e6e6" stroke-width="2.2"/><text x="1825" y="1514.8" font-size="21.5" fill="#ababab" text-anchor="end" font-weight="400" >2,000</text><path d="M1832,1436.9 H1844" stroke="#e6e6e6" stroke-width="2.2"/><text x="1825" y="1444.4" font-size="21.5" fill="#ababab" text-anchor="end" font-weight="400" >4,000</text><path d="M1832,1382.9 H1844" stroke="#e6e6e6" stroke-width="2.2"/><text x="1825" y="1390.4" font-size="21.5" fill="#ababab" text-anchor="end" font-weight="400" >6,000</text><path d="M1832,1337.3 H1844" stroke="#e6e6e6" stroke-width="2.2"/><text x="1825" y="1344.8" font-size="21.5" fill="#ababab" text-anchor="end" font-weight="400" >8,000</text><path d="M1960,1677.2 V1688.7" stroke="#e6e6e6" stroke-width="2.2"/><text x="1960" y="1710.7" font-size="21.7" fill="#ababab" text-anchor="middle" font-weight="400" >2018-10-28 02:00</text><path d="M2224.5,1677.2 V1688.7" stroke="#e6e6e6" stroke-width="2.2"/><text x="2224.5" y="1710.7" font-size="21.7" fill="#ababab" text-anchor="middle" font-weight="400" >2018-11-04 01:00</text><path d="M2490.9,1677.2 V1688.7" stroke="#e6e6e6" stroke-width="2.2"/><text x="2490.9" y="1710.7" font-size="21.7" fill="#ababab" text-anchor="middle" font-weight="400" >2018-11-11 01:00</text><path d="M2755.7,1677.2 V1688.7" stroke="#e6e6e6" stroke-width="2.2"/><text x="2755.7" y="1710.7" font-size="21.7" fill="#ababab" text-anchor="middle" font-weight="400" >2018-11-18 01:00</text><text x="2412" y="1750" font-size="26" fill="#b9b9b9" text-anchor="middle" font-weight="700" >Timestamp</text><path d="M2033.7,1677.2 V1627 H2053.2 L2583.5,1482.4 L2660.1,1536.5 V1677.2 Z" fill="#95714a" stroke="#c98e52" stroke-width="2"/><path d="M2261,1677.2 V1558 L2299.7,1329 V1677.2 Z" fill="#73282c" stroke="#9a3a3a" stroke-width="2"/><path d="M2261,1677.2 V1570.3 L2299.7,1559.8 V1677.2 Z" fill="#b4764f"/><path d="M2300,1668 L2400,1662 L2480,1660 L2560,1663 L2640,1667 L2660,1670 L2791.8,1666.7 L2830,1667 L2886.5,1646.3 L2944.2,1668.2 V1677.2 H2300 Z" fill="#857a38" stroke="#b5a43a" stroke-width="1.6"/><path d="M2640.9,1670 H2660.1 V1677.2 H2640.9 Z" fill="#b5a040"/><path d="M2109.7,1677.2 V1667.3 H2640.9 V1677.2 Z" fill="#686ba0" stroke="#4a55d0" stroke-width="1.6"/><path d="M2697.1,1651.7 V1677" stroke="#c0503c" stroke-width="2.5"/><circle cx="3006.4" cy="1332.4" r="13.8" fill="#5c5c5c"/><path d="M3002.9,1325.9 L3009.9,1332.4 L3002.9,1338.9" fill="none" stroke="#222" stroke-width="4.2"/><circle cx="3045" cy="1327.3" r="10.2" fill="#a33535"/><text x="3062" y="1336.3" font-size="25" fill="#c8c8c8" text-anchor="start" font-weight="400" >Poland</text><circle cx="3045" cy="1365.3" r="10.2" fill="#daa35f"/><text x="3062" y="1374.3" font-size="25" fill="#c8c8c8" text-anchor="start" font-weight="400" >Russia</text><circle cx="3045" cy="1403.3" r="10.2" fill="#c5b342"/><text x="3062" y="1412.3" font-size="25" fill="#c8c8c8" text-anchor="start" font-weight="400" >United States</text><circle cx="3045" cy="1441.3" r="10.2" fill="#4253d0"/><text x="3062" y="1450.3" font-size="25" fill="#c8c8c8" text-anchor="start" font-weight="400" >Republic of Korea</text><circle cx="3045" cy="1479.3" r="10.2" fill="#c4533f"/><text x="3062" y="1488.3" font-size="25" fill="#c8c8c8" text-anchor="start" font-weight="400" >Romania</text></svg></body></html>
